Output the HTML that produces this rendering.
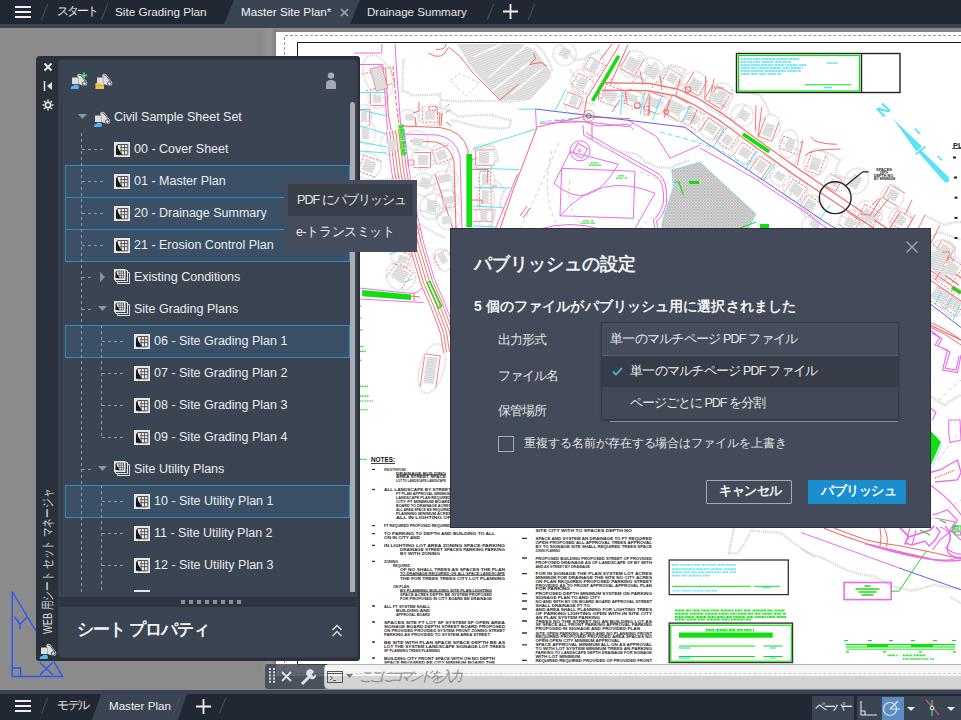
<!DOCTYPE html><html><head><meta charset="utf-8"><style>
*{margin:0;padding:0;box-sizing:border-box}
html,body{width:961px;height:720px;overflow:hidden}
body{background:#8b8b8b;font-family:"Liberation Sans",sans-serif;position:relative;color:#e8e8e8}
.a{position:absolute}
.t{white-space:nowrap;line-height:1}
.ham{width:16px;height:2px;background:#f0f0f0}
.sl{width:1px;height:16px;background:#4a5363;transform:skewX(-22deg)}
.sel{position:absolute;left:65px;width:285px;height:33px;background:#3b5066;border:1px solid #2f8cbd}
.dv{position:absolute;width:1px;background:repeating-linear-gradient(180deg,#8f99a6 0 3px,transparent 3px 6px)}
.dh{position:absolute;height:1px;background:repeating-linear-gradient(90deg,#8f99a6 0 3px,transparent 3px 6px)}
</style></head><body>
<div class="a" style="left:0;top:0;width:961px;height:24px;background:#222833"></div>
<div class="a" style="left:0;top:24px;width:961px;height:4px;background:#3b4453"></div>
<div class="a" style="left:224px;top:0;width:136px;height:24px;background:#3b4453;clip-path:polygon(10px 0,100% 0,calc(100% - 10px) 100%,0 100%)"></div>
<div class="a ham" style="left:15px;top:6px"></div>
<div class="a ham" style="left:15px;top:11px"></div>
<div class="a ham" style="left:15px;top:16px"></div>
<div class="a sl" style="left:44px;top:4px"></div>
<div class="a sl" style="left:104px;top:4px"></div>
<div class="a sl" style="left:490px;top:4px"></div>
<div class="a sl" style="left:531px;top:4px"></div>
<div class="a t" style="left:57px;top:5px;font-size:12px;color:#e6e6e6;font-weight:normal;letter-spacing:-2.1px">スタート</div>
<div class="a t" style="left:115px;top:5.5px;font-size:11.7px;color:#e6e6e6;font-weight:normal;">Site Grading Plan</div>
<div class="a t" style="left:241px;top:5.5px;font-size:11.7px;color:#f2f2f2;font-weight:normal;">Master Site Plan*</div>
<svg class="a" style="left:340px;top:8px" width="9" height="9"><path d="M1 1L8 8M8 1L1 8" stroke="#a3a7ae" stroke-width="1.6"/></svg>
<div class="a t" style="left:367px;top:5.5px;font-size:11.6px;color:#e6e6e6;font-weight:normal;">Drainage Summary</div>
<svg class="a" style="left:503px;top:4px" width="15" height="15"><path d="M7.5 0V15M0 7.5H15" stroke="#f0f0f0" stroke-width="1.8"/></svg>
<div class="a" style="left:262px;top:28px;width:14px;height:648px;background:linear-gradient(90deg,#8b8b8b,#959595 60%,#7d7d7d)"></div>
<div class="a" style="left:276px;top:28px;width:685px;height:4px;background:linear-gradient(180deg,#8b8b8b,#7f7f7f)"></div>
<div class="a" style="left:276px;top:32px;width:685px;height:644px;background:#fff"></div>
<div class="a" style="left:285px;top:35px;width:676px;height:0;border-top:1.5px dashed #999"></div>
<div class="a" style="left:284px;top:37px;width:0;height:636px;border-left:1.5px dashed #999"></div>
<div class="a" style="left:285px;top:672.5px;width:676px;height:0;border-top:1.5px dashed #999"></div>
<div class="a" style="left:296.5px;top:41.5px;width:680px;height:623px;border:1.6px solid #1a1a1a"></div>
<svg class="a" style="left:0;top:0" width="961" height="720"><defs><clipPath id="dc"><rect x="299" y="44" width="662" height="619.5"/></clipPath><pattern id="hh" width="2.2" height="2.2" patternUnits="userSpaceOnUse" patternTransform="rotate(70)"><rect width="2.2" height="2.2" fill="#e5e5e5"/><rect width="0.6" height="2.2" fill="#cdcdcd"/></pattern><pattern id="xh" width="3" height="3" patternUnits="userSpaceOnUse"><rect width="3" height="3" fill="#d6d6d6"/><path d="M0 0L3 3M3 0L0 3" stroke="#b4b4b4" stroke-width="0.7"/></pattern></defs><g clip-path="url(#dc)">
<path d="M-8.5 -16.0 V14.0 H8.5 V-16.0" fill="none" stroke="#f06a6a" stroke-width="0.8" stroke-dasharray="2.5 1.2" transform="translate(379.0 78.5) rotate(255)"/>
<ellipse cx="0" cy="0" rx="13.2" ry="22.6" fill="none" stroke="#dedede" stroke-width="2" stroke-dasharray="1.2 0.8" transform="translate(378.0 76.5) rotate(-23)"/>
<path d="M-6.5 -8.5 V6.5 H6.5 V-8.5" fill="none" stroke="#f06a6a" stroke-width="0.8" transform="translate(377.0 99.0) rotate(90)"/>
<ellipse cx="0" cy="0" rx="9.8" ry="9.8" fill="none" stroke="#dedede" stroke-width="2" stroke-dasharray="1.2 0.8" transform="translate(378.0 98.4) rotate(17)"/>
<path d="M-5.5 -9.5 V7.5 H5.5 V-9.5" fill="none" stroke="#f06a6a" stroke-width="0.8" transform="translate(364.0 117.0) rotate(180)"/>
<ellipse cx="0" cy="0" rx="8.1" ry="11.5" fill="none" stroke="#dedede" stroke-width="2" stroke-dasharray="1.2 0.8" transform="translate(363.6 116.0) rotate(5)"/>
<ellipse cx="0" cy="0" rx="8.9" ry="12.3" fill="none" stroke="#dedede" stroke-width="2" stroke-dasharray="1.2 0.8" transform="translate(366.5 132.3) rotate(-11)"/>
<path d="M-8.5 -10.5 V8.5 H8.5 V-10.5" fill="none" stroke="#f06a6a" stroke-width="0.8" stroke-dasharray="2.5 1.2" transform="translate(369.0 166.0) rotate(110)"/>
<ellipse cx="0" cy="0" rx="13.2" ry="13.2" fill="none" stroke="#dedede" stroke-width="2" stroke-dasharray="1.2 0.8" transform="translate(367.5 166.0) rotate(33)"/>
<ellipse cx="0" cy="0" rx="13.2" ry="12.3" fill="none" stroke="#dedede" stroke-width="2" stroke-dasharray="1.2 0.8" transform="translate(376.8 192.3) rotate(1)"/>
<path d="M-7.0 -8.2 V6.2 H7.0 V-8.2" fill="none" stroke="#f06a6a" stroke-width="0.8" stroke-dasharray="2.5 1.2" transform="translate(402.8 259.4) rotate(290)"/>
<ellipse cx="0" cy="0" rx="10.6" ry="9.2" fill="none" stroke="#dedede" stroke-width="2" stroke-dasharray="1.2 0.8" transform="translate(401.9 258.2) rotate(17)"/>
<path d="M-9.5 -11.0 V9.0 H9.5 V-11.0" fill="none" stroke="#f06a6a" stroke-width="0.8" stroke-dasharray="2.5 1.2" transform="translate(400.0 274.5) rotate(215)"/>
<ellipse cx="0" cy="0" rx="14.9" ry="14.0" fill="none" stroke="#dedede" stroke-width="2" stroke-dasharray="1.2 0.8" transform="translate(400.9 275.9) rotate(40)"/>
<path d="M-7.8 -17.7 V15.7 H7.8 V-17.7" fill="none" stroke="#f06a6a" stroke-width="0.8" transform="translate(430.4 370.4) rotate(188)"/>
<ellipse cx="0" cy="0" rx="12.1" ry="25.4" fill="none" stroke="#dedede" stroke-width="2" stroke-dasharray="1.2 0.8" transform="translate(431.8 368.5) rotate(16)"/>
<path d="M-7.5 -8.8 V6.8 H7.5 V-8.8" fill="none" stroke="#f06a6a" stroke-width="0.8" stroke-dasharray="2.5 1.2" transform="translate(430.0 115.3) rotate(0)"/>
<ellipse cx="0" cy="0" rx="11.5" ry="10.3" fill="none" stroke="#dedede" stroke-width="2" stroke-dasharray="1.2 0.8" transform="translate(430.6 114.9) rotate(-12)"/>
<ellipse cx="0" cy="0" rx="10.4" ry="8.5" fill="none" stroke="#dedede" stroke-width="2" stroke-dasharray="1.2 0.8" transform="translate(408.4 118.4) rotate(12)"/>
<ellipse cx="0" cy="0" rx="11.5" ry="9.8" fill="none" stroke="#dedede" stroke-width="2" stroke-dasharray="1.2 0.8" transform="translate(416.5 140.4) rotate(11)"/>
<path d="M-7.0 -9.5 V7.5 H7.0 V-9.5" fill="none" stroke="#f06a6a" stroke-width="0.8" stroke-dasharray="2.5 1.2" transform="translate(441.5 155.0) rotate(70)"/>
<ellipse cx="0" cy="0" rx="10.6" ry="11.5" fill="none" stroke="#dedede" stroke-width="2" stroke-dasharray="1.2 0.8" transform="translate(442.2 153.8) rotate(69)"/>
<path d="M-7.5 -9.5 V7.5 H7.5 V-9.5" fill="none" stroke="#f06a6a" stroke-width="0.8" transform="translate(423.0 160.0) rotate(270)"/>
<ellipse cx="0" cy="0" rx="11.5" ry="11.5" fill="none" stroke="#dedede" stroke-width="2" stroke-dasharray="1.2 0.8" transform="translate(423.1 158.1) rotate(-11)"/>
<ellipse cx="0" cy="0" rx="9.8" ry="14.0" fill="none" stroke="#dedede" stroke-width="2" stroke-dasharray="1.2 0.8" transform="translate(444.2 180.3) rotate(80)"/>
<ellipse cx="0" cy="0" rx="11.5" ry="11.5" fill="none" stroke="#dedede" stroke-width="2" stroke-dasharray="1.2 0.8" transform="translate(423.6 184.4) rotate(28)"/>
<path d="M-6.0 -9.5 V7.5 H6.0 V-9.5" fill="none" stroke="#f06a6a" stroke-width="0.8" stroke-dasharray="2.5 1.2" transform="translate(448.5 200.0) rotate(350)"/>
<ellipse cx="0" cy="0" rx="8.9" ry="11.5" fill="none" stroke="#dedede" stroke-width="2" stroke-dasharray="1.2 0.8" transform="translate(447.0 199.8) rotate(85)"/>
<ellipse cx="0" cy="0" rx="11.5" ry="13.2" fill="none" stroke="#dedede" stroke-width="2" stroke-dasharray="1.2 0.8" transform="translate(431.5 206.3) rotate(25)"/>
<ellipse cx="0" cy="0" rx="9.8" ry="11.5" fill="none" stroke="#dedede" stroke-width="2" stroke-dasharray="1.2 0.8" transform="translate(448.8 219.9) rotate(86)"/>
<path d="M-7.7 -10.5 V8.5 H7.7 V-10.5" fill="none" stroke="#f06a6a" stroke-width="0.8" transform="translate(484.1 157.6) rotate(90)"/>
<ellipse cx="0" cy="0" rx="11.8" ry="13.1" fill="none" stroke="#dedede" stroke-width="2" stroke-dasharray="1.2 0.8" transform="translate(483.1 157.2) rotate(-16)"/>
<path d="M-5.5 -9.7 V7.7 H5.5 V-9.7" fill="none" stroke="#f06a6a" stroke-width="0.8" stroke-dasharray="2.5 1.2" transform="translate(485.0 179.2) rotate(180)"/>
<ellipse cx="0" cy="0" rx="8.1" ry="11.8" fill="none" stroke="#dedede" stroke-width="2" stroke-dasharray="1.2 0.8" transform="translate(486.6 180.6) rotate(-6)"/>
<path d="M-5.8 -11.2 V9.2 H5.8 V-11.2" fill="none" stroke="#f06a6a" stroke-width="0.8" stroke-dasharray="2.5 1.2" transform="translate(485.3 197.1) rotate(180)"/>
<ellipse cx="0" cy="0" rx="8.6" ry="14.4" fill="none" stroke="#dedede" stroke-width="2" stroke-dasharray="1.2 0.8" transform="translate(485.5 198.2) rotate(-1)"/>
<path d="M-5.8 -10.5 V8.5 H5.8 V-10.5" fill="none" stroke="#f06a6a" stroke-width="0.8" transform="translate(483.7 215.6) rotate(270)"/>
<ellipse cx="0" cy="0" rx="8.6" ry="13.1" fill="none" stroke="#dedede" stroke-width="2" stroke-dasharray="1.2 0.8" transform="translate(484.9 214.3) rotate(-7)"/>
<ellipse cx="0" cy="0" rx="9.8" ry="11.5" fill="none" stroke="#dedede" stroke-width="2" stroke-dasharray="1.2 0.8" transform="translate(390.6 143.6) rotate(11)"/>
<path d="M-7.5 -9.5 V7.5 H7.5 V-9.5" fill="none" stroke="#f06a6a" stroke-width="0.8" stroke-dasharray="2.5 1.2" transform="translate(410.0 233.0) rotate(290)"/>
<ellipse cx="0" cy="0" rx="11.5" ry="11.5" fill="none" stroke="#dedede" stroke-width="2" stroke-dasharray="1.2 0.8" transform="translate(410.3 233.8) rotate(30)"/>
<path d="M-7.5 -8.0 V6.0 H7.5 V-8.0" fill="none" stroke="#f06a6a" stroke-width="0.8" stroke-dasharray="2.5 1.2" transform="translate(443.0 258.5) rotate(150)"/>
<ellipse cx="0" cy="0" rx="11.5" ry="8.9" fill="none" stroke="#dedede" stroke-width="2" stroke-dasharray="1.2 0.8" transform="translate(443.1 259.9) rotate(62)"/>
<path d="M-6.2 -10.2 V8.2 H6.2 V-10.2" fill="none" stroke="#f06a6a" stroke-width="0.8" stroke-dasharray="2.5 1.2" transform="translate(594.3 66.3) rotate(120)"/>
<ellipse cx="0" cy="0" rx="9.3" ry="12.7" fill="none" stroke="#dedede" stroke-width="2" stroke-dasharray="1.2 0.8" transform="translate(593.5 64.9) rotate(32)"/>
<path d="M-7.1 -10.1 V8.1 H7.1 V-10.1" fill="none" stroke="#f06a6a" stroke-width="0.8" stroke-dasharray="2.5 1.2" transform="translate(582.1 83.1) rotate(120)"/>
<ellipse cx="0" cy="0" rx="10.9" ry="12.5" fill="none" stroke="#dedede" stroke-width="2" stroke-dasharray="1.2 0.8" transform="translate(581.8 81.6) rotate(10)"/>
<path d="M-6.2 -9.3 V7.3 H6.2 V-9.3" fill="none" stroke="#f06a6a" stroke-width="0.8" transform="translate(573.8 100.8) rotate(290)"/>
<ellipse cx="0" cy="0" rx="9.4" ry="11.2" fill="none" stroke="#dedede" stroke-width="2" stroke-dasharray="1.2 0.8" transform="translate(573.9 102.8) rotate(5)"/>
<path d="M-8.2 -11.1 V9.1 H8.2 V-11.1" fill="none" stroke="#f06a6a" stroke-width="0.8" transform="translate(631.7 64.4) rotate(30)"/>
<ellipse cx="0" cy="0" rx="12.7" ry="14.2" fill="none" stroke="#dedede" stroke-width="2" stroke-dasharray="1.2 0.8" transform="translate(633.4 64.2) rotate(47)"/>
<ellipse cx="0" cy="0" rx="14.0" ry="12.8" fill="none" stroke="#dedede" stroke-width="2" stroke-dasharray="1.2 0.8" transform="translate(651.1 70.7) rotate(30)"/>
<path d="M-7.2 -9.1 V7.1 H7.2 V-9.1" fill="none" stroke="#f06a6a" stroke-width="0.8" stroke-dasharray="2.5 1.2" transform="translate(672.0 78.3) rotate(210)"/>
<ellipse cx="0" cy="0" rx="10.9" ry="10.9" fill="none" stroke="#dedede" stroke-width="2" stroke-dasharray="1.2 0.8" transform="translate(670.5 78.0) rotate(11)"/>
<path d="M-8.0 -10.1 V8.1 H8.0 V-10.1" fill="none" stroke="#f06a6a" stroke-width="0.8" transform="translate(695.5 84.9) rotate(30)"/>
<ellipse cx="0" cy="0" rx="12.3" ry="12.6" fill="none" stroke="#dedede" stroke-width="2" stroke-dasharray="1.2 0.8" transform="translate(694.3 83.9) rotate(37)"/>
<path d="M-9.0 -9.2 V7.2 H9.0 V-9.2" fill="none" stroke="#f06a6a" stroke-width="0.8" stroke-dasharray="2.5 1.2" transform="translate(610.2 95.3) rotate(110)"/>
<ellipse cx="0" cy="0" rx="14.1" ry="11.0" fill="none" stroke="#dedede" stroke-width="2" stroke-dasharray="1.2 0.8" transform="translate(610.7 93.7) rotate(29)"/>
<path d="M-7.7 -8.2 V6.2 H7.7 V-8.2" fill="none" stroke="#f06a6a" stroke-width="0.8" stroke-dasharray="2.5 1.2" transform="translate(632.2 98.0) rotate(110)"/>
<ellipse cx="0" cy="0" rx="11.8" ry="9.4" fill="none" stroke="#dedede" stroke-width="2" stroke-dasharray="1.2 0.8" transform="translate(633.0 99.6) rotate(1)"/>
<path d="M-9.1 -9.2 V7.2 H9.1 V-9.2" fill="none" stroke="#f06a6a" stroke-width="0.8" transform="translate(653.4 102.7) rotate(110)"/>
<ellipse cx="0" cy="0" rx="14.2" ry="11.0" fill="none" stroke="#dedede" stroke-width="2" stroke-dasharray="1.2 0.8" transform="translate(654.9 102.8) rotate(9)"/>
<path d="M-10.0 -10.1 V8.1 H10.0 V-10.1" fill="none" stroke="#f06a6a" stroke-width="0.8" transform="translate(674.9 107.4) rotate(120)"/>
<ellipse cx="0" cy="0" rx="15.8" ry="12.5" fill="none" stroke="#dedede" stroke-width="2" stroke-dasharray="1.2 0.8" transform="translate(676.6 107.9) rotate(24)"/>
<path d="M-9.0 -9.2 V7.2 H9.0 V-9.2" fill="none" stroke="#f06a6a" stroke-width="0.8" stroke-dasharray="2.5 1.2" transform="translate(692.5 117.7) rotate(120)"/>
<ellipse cx="0" cy="0" rx="14.0" ry="11.0" fill="none" stroke="#dedede" stroke-width="2" stroke-dasharray="1.2 0.8" transform="translate(691.4 119.7) rotate(46)"/>
<path d="M-7.2 -10.1 V8.1 H7.2 V-10.1" fill="none" stroke="#f06a6a" stroke-width="0.8" transform="translate(720.7 96.2) rotate(120)"/>
<ellipse cx="0" cy="0" rx="11.0" ry="12.5" fill="none" stroke="#dedede" stroke-width="2" stroke-dasharray="1.2 0.8" transform="translate(721.6 95.2) rotate(14)"/>
<ellipse cx="0" cy="0" rx="11.5" ry="11.5" fill="none" stroke="#dedede" stroke-width="2" stroke-dasharray="1.2 0.8" transform="translate(564.7 54.2) rotate(15)"/>
<path d="M-10.0 -9.1 V7.1 H10.0 V-9.1" fill="none" stroke="#f06a6a" stroke-width="0.8" transform="translate(716.5 98.3) rotate(30)"/>
<ellipse cx="0" cy="0" rx="15.8" ry="10.9" fill="none" stroke="#dedede" stroke-width="2" stroke-dasharray="1.2 0.8" transform="translate(715.3 99.1) rotate(46)"/>
<ellipse cx="0" cy="0" rx="11.2" ry="11.0" fill="none" stroke="#dedede" stroke-width="2" stroke-dasharray="1.2 0.8" transform="translate(742.3 115.3) rotate(40)"/>
<path d="M-7.1 -11.1 V9.1 H7.1 V-11.1" fill="none" stroke="#f06a6a" stroke-width="0.8" transform="translate(768.4 130.2) rotate(20)"/>
<ellipse cx="0" cy="0" rx="10.9" ry="14.1" fill="none" stroke="#dedede" stroke-width="2" stroke-dasharray="1.2 0.8" transform="translate(768.3 128.3) rotate(30)"/>
<path d="M-6.4 -11.1 V9.1 H6.4 V-11.1" fill="none" stroke="#f06a6a" stroke-width="0.8" stroke-dasharray="2.5 1.2" transform="translate(789.9 145.2) rotate(110)"/>
<ellipse cx="0" cy="0" rx="9.5" ry="14.1" fill="none" stroke="#dedede" stroke-width="2" stroke-dasharray="1.2 0.8" transform="translate(788.6 143.7) rotate(7)"/>
<path d="M-7.2 -11.0 V9.0 H7.2 V-11.0" fill="none" stroke="#f06a6a" stroke-width="0.8" stroke-dasharray="2.5 1.2" transform="translate(815.2 163.9) rotate(20)"/>
<ellipse cx="0" cy="0" rx="11.1" ry="14.1" fill="none" stroke="#dedede" stroke-width="2" stroke-dasharray="1.2 0.8" transform="translate(815.6 162.5) rotate(27)"/>
<path d="M-8.2 -9.1 V7.1 H8.2 V-9.1" fill="none" stroke="#f06a6a" stroke-width="0.8" transform="translate(711.3 128.3) rotate(215)"/>
<ellipse cx="0" cy="0" rx="12.7" ry="10.9" fill="none" stroke="#dedede" stroke-width="2" stroke-dasharray="1.2 0.8" transform="translate(710.9 128.1) rotate(29)"/>
<path d="M-7.1 -9.2 V7.2 H7.1 V-9.2" fill="none" stroke="#f06a6a" stroke-width="0.8" stroke-dasharray="2.5 1.2" transform="translate(727.1 139.7) rotate(35)"/>
<ellipse cx="0" cy="0" rx="10.9" ry="10.9" fill="none" stroke="#dedede" stroke-width="2" stroke-dasharray="1.2 0.8" transform="translate(727.7 137.8) rotate(23)"/>
<path d="M-8.2 -9.2 V7.2 H8.2 V-9.2" fill="none" stroke="#f06a6a" stroke-width="0.8" stroke-dasharray="2.5 1.2" transform="translate(745.0 152.7) rotate(215)"/>
<ellipse cx="0" cy="0" rx="12.6" ry="11.0" fill="none" stroke="#dedede" stroke-width="2" stroke-dasharray="1.2 0.8" transform="translate(744.6 151.5) rotate(22)"/>
<path d="M-7.3 -10.2 V8.2 H7.3 V-10.2" fill="none" stroke="#f06a6a" stroke-width="0.8" transform="translate(760.8 166.7) rotate(215)"/>
<ellipse cx="0" cy="0" rx="11.2" ry="12.7" fill="none" stroke="#dedede" stroke-width="2" stroke-dasharray="1.2 0.8" transform="translate(762.4 167.9) rotate(43)"/>
<ellipse cx="0" cy="0" rx="10.6" ry="9.5" fill="none" stroke="#dedede" stroke-width="2" stroke-dasharray="1.2 0.8" transform="translate(780.0 175.8) rotate(39)"/>
<path d="M-8.5 -9.5 V7.5 H8.5 V-9.5" fill="none" stroke="#f06a6a" stroke-width="0.8" stroke-dasharray="2.5 1.2" transform="translate(796.0 190.0) rotate(215)"/>
<ellipse cx="0" cy="0" rx="13.2" ry="11.5" fill="none" stroke="#dedede" stroke-width="2" stroke-dasharray="1.2 0.8" transform="translate(795.1 188.5) rotate(45)"/>
<path d="M-7.5 -9.5 V7.5 H7.5 V-9.5" fill="none" stroke="#f06a6a" stroke-width="0.8" stroke-dasharray="2.5 1.2" transform="translate(810.0 205.0) rotate(125)"/>
<ellipse cx="0" cy="0" rx="11.5" ry="11.5" fill="none" stroke="#dedede" stroke-width="2" stroke-dasharray="1.2 0.8" transform="translate(811.6 206.5) rotate(43)"/>
<ellipse cx="0" cy="0" rx="11.5" ry="14.0" fill="none" stroke="#dedede" stroke-width="2" stroke-dasharray="1.2 0.8" transform="translate(856.1 181.1) rotate(39)"/>
<path d="M-9.0 -10.5 V8.5 H9.0 V-10.5" fill="none" stroke="#f06a6a" stroke-width="0.8" stroke-dasharray="2.5 1.2" transform="translate(868.5 216.0) rotate(210)"/>
<ellipse cx="0" cy="0" rx="14.0" ry="13.2" fill="none" stroke="#dedede" stroke-width="2" stroke-dasharray="1.2 0.8" transform="translate(868.4 214.0) rotate(24)"/>
<path d="M-7.5 -9.5 V7.5 H7.5 V-9.5" fill="none" stroke="#f06a6a" stroke-width="0.8" transform="translate(893.0 195.0) rotate(120)"/>
<ellipse cx="0" cy="0" rx="11.5" ry="11.5" fill="none" stroke="#dedede" stroke-width="2" stroke-dasharray="1.2 0.8" transform="translate(892.1 196.8) rotate(22)"/>
<path d="M-7.5 -9.5 V7.5 H7.5 V-9.5" fill="none" stroke="#f06a6a" stroke-width="0.8" stroke-dasharray="2.5 1.2" transform="translate(900.0 220.0) rotate(120)"/>
<ellipse cx="0" cy="0" rx="11.5" ry="11.5" fill="none" stroke="#dedede" stroke-width="2" stroke-dasharray="1.2 0.8" transform="translate(900.1 219.6) rotate(50)"/>
<path d="M-8.5 -9.5 V7.5 H8.5 V-9.5" fill="none" stroke="#f06a6a" stroke-width="0.8" transform="translate(906.0 250.0) rotate(300)"/>
<ellipse cx="0" cy="0" rx="13.2" ry="11.5" fill="none" stroke="#dedede" stroke-width="2" stroke-dasharray="1.2 0.8" transform="translate(907.9 248.1) rotate(35)"/>
<path d="M-9.0 -9.5 V7.5 H9.0 V-9.5" fill="none" stroke="#f06a6a" stroke-width="0.8" stroke-dasharray="2.5 1.2" transform="translate(941.5 270.0) rotate(300)"/>
<ellipse cx="0" cy="0" rx="14.0" ry="11.5" fill="none" stroke="#dedede" stroke-width="2" stroke-dasharray="1.2 0.8" transform="translate(941.1 268.2) rotate(18)"/>
<path d="M-7.5 -9.5 V7.5 H7.5 V-9.5" fill="none" stroke="#f06a6a" stroke-width="0.8" transform="translate(945.0 250.0) rotate(210)"/>
<ellipse cx="0" cy="0" rx="11.5" ry="11.5" fill="none" stroke="#dedede" stroke-width="2" stroke-dasharray="1.2 0.8" transform="translate(944.0 251.6) rotate(32)"/>
<path d="M-7.5 -9.5 V7.5 H7.5 V-9.5" fill="none" stroke="#f06a6a" stroke-width="0.8" transform="translate(850.0 223.0) rotate(305)"/>
<ellipse cx="0" cy="0" rx="11.5" ry="11.5" fill="none" stroke="#dedede" stroke-width="2" stroke-dasharray="1.2 0.8" transform="translate(851.2 221.3) rotate(39)"/>
<ellipse cx="0" cy="0" rx="11.5" ry="9.8" fill="none" stroke="#dedede" stroke-width="2" stroke-dasharray="1.2 0.8" transform="translate(813.2 225.7) rotate(16)"/>
<path d="M-6.5 -7.5 V5.5 H6.5 V-7.5" fill="none" stroke="#f06a6a" stroke-width="0.8" transform="translate(834.0 183.0) rotate(300)"/>
<ellipse cx="0" cy="0" rx="9.8" ry="8.1" fill="none" stroke="#dedede" stroke-width="2" stroke-dasharray="1.2 0.8" transform="translate(834.2 183.4) rotate(27)"/>
<path d="M-10.0 -14.5 V12.5 H10.0 V-14.5" fill="none" stroke="#f06a6a" stroke-width="0.8" stroke-dasharray="2.5 1.2" transform="translate(937.5 260.0) rotate(305)"/>
<ellipse cx="0" cy="0" rx="15.8" ry="20.0" fill="none" stroke="#dedede" stroke-width="2" stroke-dasharray="1.2 0.8" transform="translate(937.9 259.5) rotate(26)"/>
<path d="M-8.8 -10.8 V8.8 H8.8 V-10.8" fill="none" stroke="#f06a6a" stroke-width="0.8" stroke-dasharray="2.5 1.2" transform="translate(951.2 268.8) rotate(215)"/>
<ellipse cx="0" cy="0" rx="13.6" ry="13.6" fill="none" stroke="#dedede" stroke-width="2" stroke-dasharray="1.2 0.8" transform="translate(949.4 269.8) rotate(38)"/>
<path d="M-10.0 -12.0 V10.0 H10.0 V-12.0" fill="none" stroke="#f06a6a" stroke-width="0.8" stroke-dasharray="2.5 1.2" transform="translate(940.0 295.0) rotate(305)"/>
<ellipse cx="0" cy="0" rx="15.8" ry="15.8" fill="none" stroke="#dedede" stroke-width="2" stroke-dasharray="1.2 0.8" transform="translate(938.2 294.3) rotate(31)"/>
<path d="M-8.8 -10.8 V8.8 H8.8 V-10.8" fill="none" stroke="#f06a6a" stroke-width="0.8" stroke-dasharray="2.5 1.2" transform="translate(953.8 303.8) rotate(35)"/>
<ellipse cx="0" cy="0" rx="13.6" ry="13.6" fill="none" stroke="#dedede" stroke-width="2" stroke-dasharray="1.2 0.8" transform="translate(954.9 302.6) rotate(44)"/>
<path d="M403.4 58.7 Q402.7 74.9 402.5 90.6 Q409.3 92.8 411.8 95.3 Q425.9 95.2 440.0 94.3 Q439.4 97.2 442.0 100.0 Q456.6 102.0 470.0 101.0 Q488.5 100.4 511.0 101.8 Q518.5 101.4 530.0 98.0 Q542.1 81.7 552.3 70.0 Q550.1 62.9 543.0 51.2 Q540.0 48.0 535.5 43.7" stroke="#d9d9d9" stroke-width="2.4" fill="none" stroke-dasharray="1.3 0.9"/>
<path d="M441.8 100.0 Q439.2 101.3 440.0 107.4 Q449.5 109.9 458.7 116.8 Q474.0 114.6 492.4 115.0 Q499.4 117.6 511.0 120.5 Q509.7 126.0 509.0 128.0 Q500.6 128.7 492.0 128.0 Q481.0 127.3 470.0 125.0 Q459.8 121.4 450.0 120.0" stroke="#d9d9d9" stroke-width="2.4" fill="none" stroke-dasharray="1.3 0.9"/>
<path d="M560.0 44.0 Q570.0 54.5 575.0 60.0 Q581.7 60.0 585.0 58.0 Q591.6 52.6 600.0 50.0" stroke="#d9d9d9" stroke-width="2.4" fill="none" stroke-dasharray="1.3 0.9"/>
<path d="M570.0 70.0 Q573.9 75.4 580.0 85.0 Q578.8 92.0 575.0 100.0 Q586.7 101.9 595.0 105.0" stroke="#d9d9d9" stroke-width="2.4" fill="none" stroke-dasharray="1.3 0.9"/>
<path d="M640.0 55.0 Q638.3 66.7 632.0 75.0 Q636.0 76.0 645.0 80.0 Q652.1 70.8 655.0 62.0 Q659.9 69.5 660.0 78.0 Q662.9 72.1 670.0 65.0 Q678.9 66.3 685.0 70.0 Q680.4 76.7 680.0 85.0 Q692.3 85.3 700.0 83.0" stroke="#d9d9d9" stroke-width="2.4" fill="none" stroke-dasharray="1.3 0.9"/>
<path d="M600.0 92.0 Q603.1 95.7 610.0 102.0 Q615.5 96.3 625.0 95.0 Q634.0 97.9 640.0 104.0 Q650.3 101.7 660.0 100.0 Q664.5 107.2 672.0 112.0 Q679.2 110.7 690.0 108.0 Q693.1 113.6 700.0 120.0" stroke="#d9d9d9" stroke-width="2.4" fill="none" stroke-dasharray="1.3 0.9"/>
<path d="M725.0 100.0 Q721.1 106.3 720.0 115.0 Q729.9 119.0 735.0 120.0 Q739.0 114.4 745.0 105.0" stroke="#d9d9d9" stroke-width="2.4" fill="none" stroke-dasharray="1.3 0.9"/>
<path d="M730.0 90.0 Q743.6 92.0 760.0 95.0 Q766.8 105.7 770.0 115.0" stroke="#d9d9d9" stroke-width="2.4" fill="none" stroke-dasharray="1.3 0.9"/>
<path d="M780.0 140.0 Q788.0 147.4 800.0 150.0 Q796.1 156.3 795.0 165.0" stroke="#d9d9d9" stroke-width="2.4" fill="none" stroke-dasharray="1.3 0.9"/>
<path d="M820.0 150.0 Q831.4 154.1 840.0 160.0 Q836.5 165.4 835.0 175.0 Q845.5 177.9 860.0 180.0" stroke="#d9d9d9" stroke-width="2.4" fill="none" stroke-dasharray="1.3 0.9"/>
<path d="M840.0 215.0 Q848.7 220.5 860.0 225.0 Q869.4 219.8 880.0 215.0" stroke="#d9d9d9" stroke-width="2.4" fill="none" stroke-dasharray="1.3 0.9"/>
<path d="M880.0 235.0 Q892.3 239.9 900.0 245.0 Q907.9 244.3 915.0 240.0 Q923.4 245.8 935.0 255.0" stroke="#d9d9d9" stroke-width="2.4" fill="none" stroke-dasharray="1.3 0.9"/>
<path d="M925.0 215.0 Q937.0 221.6 945.0 225.0 Q951.7 221.9 961.0 222.0" stroke="#d9d9d9" stroke-width="2.4" fill="none" stroke-dasharray="1.3 0.9"/>
<path d="M380.0 180.0 Q390.2 180.2 398.0 176.0 Q412.5 183.3 430.0 186.0 Q442.9 181.5 452.0 176.0 Q453.1 186.0 455.0 200.0 Q445.2 209.8 440.0 215.0 Q428.7 213.5 420.0 210.0 Q408.8 217.6 400.0 222.0 Q393.0 212.5 385.0 205.0 Q380.9 193.6 380.0 180.0" stroke="#d9d9d9" stroke-width="2.4" fill="none" stroke-dasharray="1.3 0.9"/>
<path d="M395.0 230.0 Q405.3 225.6 420.0 224.0 Q432.8 232.8 445.0 238.0" stroke="#d9d9d9" stroke-width="2.4" fill="none" stroke-dasharray="1.3 0.9"/>
<path d="M476.0 150.0 Q484.6 146.4 492.0 145.0 Q497.1 151.0 498.0 160.0 Q491.6 164.8 490.0 172.0" stroke="#d9d9d9" stroke-width="2.4" fill="none" stroke-dasharray="1.3 0.9"/>
<path d="M495.0 180.0 Q499.7 182.8 505.0 190.0 Q500.9 196.8 500.0 205.0 Q502.9 208.2 505.0 215.0" stroke="#d9d9d9" stroke-width="2.4" fill="none" stroke-dasharray="1.3 0.9"/>
<path d="M480.0 205.0 Q486.8 209.5 495.0 210.0 Q494.9 219.8 490.0 228.0" stroke="#d9d9d9" stroke-width="2.4" fill="none" stroke-dasharray="1.3 0.9"/>
<path d="M440.0 150.0 Q446.0 157.9 450.0 165.0 Q445.7 170.2 445.0 180.0" stroke="#d9d9d9" stroke-width="2.4" fill="none" stroke-dasharray="1.3 0.9"/>
<path d="M425.0 197.0 Q430.1 203.1 440.0 205.0 Q438.5 214.8 435.0 220.0" stroke="#d9d9d9" stroke-width="2.4" fill="none" stroke-dasharray="1.3 0.9"/>
<path d="M470.0 310.0 Q472.6 320.7 480.0 330.0 Q474.9 338.7 470.0 345.0" stroke="#d9d9d9" stroke-width="2.4" fill="none" stroke-dasharray="1.3 0.9"/>
<path d="M734.0 528.3 Q730.6 543.3 729.0 553.3 Q731.0 553.5 737.3 553.3 Q745.3 543.9 751.0 530.4 Q766.7 532.5 780.0 532.5 Q799.0 547.1 815.0 557.5" stroke="#d9d9d9" stroke-width="2.4" fill="none" stroke-dasharray="1.3 0.9"/>
<path d="M801.0 549.2 Q810.7 554.3 821.8 557.5 Q836.3 565.6 846.8 570.0 Q859.9 574.6 873.9 576.2 Q885.1 581.8 892.7 586.7 Q902.7 588.2 911.4 590.8 Q923.3 588.2 934.3 584.6 Q945.6 587.4 961.0 588.8" stroke="#d9d9d9" stroke-width="2.4" fill="none" stroke-dasharray="1.3 0.9"/>
<path d="M951.0 597.0 Q958.5 602.0 961.0 603.3" stroke="#d9d9d9" stroke-width="2.4" fill="none" stroke-dasharray="1.3 0.9"/>
<path d="M925.0 240.0 Q933.6 235.4 940.0 232.0 Q951.7 236.4 961.0 240.0" stroke="#d9d9d9" stroke-width="2.4" fill="none" stroke-dasharray="1.3 0.9"/>
<path d="M935.0 295.0 Q942.2 299.2 950.0 300.0 Q953.4 306.3 961.0 310.0" stroke="#d9d9d9" stroke-width="2.4" fill="none" stroke-dasharray="1.3 0.9"/>
<path d="M930.0 395.0 Q935.1 400.5 945.0 405.0 Q952.9 398.7 961.0 395.0" stroke="#d9d9d9" stroke-width="2.4" fill="none" stroke-dasharray="1.3 0.9"/>
<path d="M560 229 Q540 200 552 150 M585 229 Q565 210 570 180 M640 229 Q650 215 670 210 M520 229 Q535 200 560 140" stroke="#d0d0d0" stroke-width="1" fill="none" stroke-dasharray="4 3"/>
<path d="M938 400 L961 380 M938 460 L961 430 M930 520 L961 500" stroke="#d0d0d0" stroke-width="1" fill="none" stroke-dasharray="4 3"/>
<path d="M457 44 L522 44 L535 50 L550 70 L551 77 L530 100 L500 100 L475 72 L468 62 Z" fill="url(#hh)"/>
<path d="M473.6 56.9 L501.7 43.7" stroke="#ffffff" stroke-width="1.6" fill="none"/>
<path d="M488.6 77.5 L526.0 45.6" stroke="#ffffff" stroke-width="1.6" fill="none"/>
<path d="M492.4 90.6 L529.8 62.5" stroke="#ffffff" stroke-width="1.6" fill="none"/>
<path d="M511.0 94.3 L543.0 68.0" stroke="#ffffff" stroke-width="1.6" fill="none"/>
<path d="M449.3 47.5 L460.5 56.9 L473.6 73.7 L499.9 100.0 L518.6 84.0" stroke="#f06a6a" stroke-width="1" fill="none"/>
<path d="M533.6 53.0 L535.5 58.7 L529.8 64.4 L541.0 62.5 L546.7 66.2" stroke="#f06a6a" stroke-width="1" fill="none"/>
<path d="M428.7 53.1 Q441.8 62 448.4 47.5 M436 49.4 Q446 50 446 44" stroke="#f06a6a" stroke-width="1" fill="none"/>
<path d="M450.2 80.3 L459.6 73.7 L479.3 83.0 L466.2 96.2 Z" stroke="#cccccc" stroke-width="1" fill="none" stroke-dasharray="3 2"/>
<path d="M354.0 53.0 L381.7 53.0 L382.0 44.0" stroke="#ec6cec" stroke-width="1.0" fill="none"/>
<path d="M360.0 64.5 L382.8 64.4 L387.5 130.0" stroke="#ec6cec" stroke-width="1.0" fill="none"/>
<path d="M395.0 43.7 L396.0 62.5 L400.6 124.3 L402.5 126.0" stroke="#ec6cec" stroke-width="1.0" fill="none"/>
<path d="M385.6 68.0 L388.4 115.0 L391.2 130.0" stroke="#f06a6a" stroke-width="1.0" fill="none"/>
<path d="M393.0 66.0 L396.0 102.0 L398.7 122.4" stroke="#f06a6a" stroke-width="1" fill="none" stroke-dasharray="4 2"/>
<path d="M403.9 129.0 L408.9 168.8 L415.8 208.4 L423.7 243.0 L434.6 279.4 L444.4 302.0 L454.7 329.9 L457.9 350.8" stroke="#ec6cec" stroke-width="0.9" fill="none"/>
<path d="M401.5 129.3 L406.4 169.2 L413.4 208.9 L421.3 243.6 L432.2 280.2 L442.1 303.0 L452.3 330.5 L455.4 351.2" stroke="#f06a6a" stroke-width="0.9" fill="none"/>
<path d="M398.5 129.7 L403.5 169.6 L410.5 209.5 L418.4 244.4 L429.4 281.2 L439.3 304.1 L449.4 331.3 L452.5 351.6" stroke="#f06a6a" stroke-width="0.9" fill="none"/>
<path d="M395.5 130.1 L400.5 170.1 L407.5 210.1 L415.5 245.1 L426.5 282.2 L436.5 305.2 L446.5 332.1 L449.5 352.1" stroke="#f06a6a" stroke-width="0.9" fill="none"/>
<path d="M392.5 130.4 L397.5 170.5 L404.6 210.7 L412.6 245.9 L423.7 283.2 L433.8 306.3 L443.6 332.9 L446.5 352.5" stroke="#f06a6a" stroke-width="0.9" fill="none"/>
<path d="M389.6 130.8 L394.6 171.0 L401.6 211.3 L409.7 246.7 L420.9 284.1 L431.0 307.4 L440.7 333.7 L443.6 353.0" stroke="#f06a6a" stroke-width="0.9" fill="none"/>
<path d="M386.6 131.2 L391.6 171.4 L398.7 211.9 L406.7 247.1" stroke="#ec6cec" stroke-width="0.9" fill="none"/>
<path d="M360.0 92.5 L387.0 92.5" stroke="#5ae2f6" stroke-width="1.0" fill="none"/>
<path d="M360.0 110.0 L387.0 116.0" stroke="#5ae2f6" stroke-width="1.0" fill="none"/>
<path d="M360.0 126.0 L387.0 134.0" stroke="#5ae2f6" stroke-width="1.0" fill="none"/>
<path d="M360.0 142.0 L387.0 147.0" stroke="#5ae2f6" stroke-width="1.0" fill="none"/>
<path d="M360.0 151.0 L387.0 153.0" stroke="#5ae2f6" stroke-width="1.0" fill="none"/>
<path d="M389.3 253.9 L396.5 252.0" stroke="#5ae2f6" stroke-width="1.0" fill="none"/>
<path d="M402.0 282.8 L412.8 279.0" stroke="#5ae2f6" stroke-width="1.0" fill="none"/>
<path d="M362.0 212.0 L380.0 215.0" stroke="#5ae2f6" stroke-width="1.0" fill="none"/>
<path d="M362.0 238.0 L378.0 240.0" stroke="#5ae2f6" stroke-width="1.0" fill="none"/>
<rect x="-6.0" y="-11.5" width="12.0" height="23.0" fill="url(#hh)" stroke="#f06a6a" stroke-width="0.6" transform="translate(379.0 78.5) rotate(-15)"/>
<rect x="-4.0" y="-4.0" width="8.0" height="8.0" fill="url(#hh)" transform="translate(377.0 99.0) rotate(0)"/>
<rect x="-3.0" y="-5.0" width="6.0" height="10.0" fill="url(#hh)" transform="translate(364.0 117.0) rotate(0)"/>
<rect x="-3.5" y="-5.5" width="7.0" height="11.0" fill="url(#hh)" transform="translate(365.5 133.5) rotate(0)"/>
<rect x="-6.0" y="-6.0" width="12.0" height="12.0" fill="url(#hh)" transform="translate(369.0 166.0) rotate(20)"/>
<rect x="-6.0" y="-5.5" width="12.0" height="11.0" fill="url(#hh)" transform="translate(376.0 190.5) rotate(10)"/>
<rect x="-4.5" y="-3.7" width="9.0" height="7.3" fill="url(#hh)" transform="translate(402.8 259.4) rotate(20)"/>
<rect x="-7.0" y="-6.5" width="14.0" height="13.0" fill="url(#hh)" transform="translate(400.0 274.5) rotate(35)"/>
<rect x="-5.3" y="-13.2" width="10.7" height="26.3" fill="url(#hh)" transform="translate(430.4 370.4) rotate(8)"/>
<path d="M362.2 290 L411 294.5 L411 300 L362.2 296.3 Z" fill="#10e010"/>
<path d="M360.4 288.2 L412.8 293.6 Q418 293 422 288" stroke="#ec6cec" stroke-width="1.0" fill="none"/>
<path d="M360.4 299 L423.6 302.6" stroke="#ec6cec" stroke-width="1.0" fill="none"/>
<path d="M411.0 296.0 L420.0 297.0" stroke="#f06a6a" stroke-width="1.0" fill="none"/>
<path d="M414.0 293.0 L414.0 301.0" stroke="#f06a6a" stroke-width="1.0" fill="none"/>
<path d="M427.2 282.8 L430 281.3 L441.6 306.2 L438.4 308 Z" fill="none" stroke="#10e010" stroke-width="1.3"/>
<path d="M360.0 346.5 L364.0 346.5" stroke="#10e010" stroke-width="1.1" fill="none" stroke-dasharray="1.2 0.5"/>
<path d="M360.0 351.4 L366.0 351.4" stroke="#10e010" stroke-width="1.1" fill="none" stroke-dasharray="1.2 0.5"/>
<path d="M360.0 360.2 L362.0 360.2" stroke="#10e010" stroke-width="1.1" fill="none" stroke-dasharray="1.2 0.5"/>
<path d="M360.0 386.4 L368.0 386.4" stroke="#10e010" stroke-width="1.1" fill="none" stroke-dasharray="1.2 0.5"/>
<path d="M360.0 396.1 L369.0 396.1" stroke="#10e010" stroke-width="1.1" fill="none" stroke-dasharray="1.2 0.5"/>
<path d="M360.0 401.0 L373.0 401.0" stroke="#10e010" stroke-width="1.1" fill="none" stroke-dasharray="1.2 0.5"/>
<path d="M360.0 409.8 L368.0 409.8" stroke="#10e010" stroke-width="1.1" fill="none" stroke-dasharray="1.2 0.5"/>
<path d="M360.0 459.4 L367.0 459.4" stroke="#10e010" stroke-width="1.1" fill="none" stroke-dasharray="1.2 0.5"/>
<path d="M360.0 306.0 L362.0 306.0" stroke="#10e010" stroke-width="1.1" fill="none" stroke-dasharray="1.2 0.5"/>
<path d="M360.0 318.0 L362.0 318.0" stroke="#10e010" stroke-width="1.1" fill="none" stroke-dasharray="1.2 0.5"/>
<path d="M360.0 330.0 L363.0 330.0" stroke="#10e010" stroke-width="1.1" fill="none" stroke-dasharray="1.2 0.5"/>
<text x="0" y="0" font-family="Liberation Sans" font-size="6.5" font-weight="bold" fill="none" stroke="#10e010" stroke-width="0.7" textLength="31" lengthAdjust="spacingAndGlyphs" transform="translate(398.5 125) rotate(84)">BIRCH ROAD</text>
<path d="M402 126 L440 127.5 Q463 131 468 150 L469.6 229" stroke="#f06a6a" stroke-width="1.0" fill="none"/>
<path d="M405 134 L438 135 Q456 139 460 156 L462 229" stroke="#ec6cec" stroke-width="1.0" fill="none"/>
<path d="M410 141 L436 142 Q451 146 454 162 L456 229" stroke="#f06a6a" stroke-width="1.0" fill="none"/>
<rect x="466.4" y="154" width="5.6" height="73" fill="#10e010"/>
<path d="M435.0 174.0 L453.0 229.0" stroke="#f06a6a" stroke-width="1.0" fill="none"/>
<rect x="-5.0" y="-4.3" width="10.0" height="8.6" fill="url(#hh)" transform="translate(430.0 115.3) rotate(0)"/>
<rect x="-4.3" y="-3.2" width="8.7" height="6.5" fill="url(#hh)" transform="translate(409.4 117.2) rotate(0)"/>
<rect x="-5.0" y="-4.0" width="10.0" height="8.0" fill="url(#hh)" transform="translate(418.0 142.0) rotate(10)"/>
<rect x="-4.5" y="-5.0" width="9.0" height="10.0" fill="url(#hh)" transform="translate(441.5 155.0) rotate(70)"/>
<rect x="-5.0" y="-5.0" width="10.0" height="10.0" fill="url(#hh)" transform="translate(423.0 160.0) rotate(0)"/>
<rect x="-4.0" y="-6.5" width="8.0" height="13.0" fill="url(#hh)" transform="translate(444.0 178.5) rotate(80)"/>
<rect x="-5.0" y="-5.0" width="10.0" height="10.0" fill="url(#hh)" transform="translate(425.0 183.0) rotate(20)"/>
<rect x="-3.5" y="-5.0" width="7.0" height="10.0" fill="url(#hh)" transform="translate(448.5 200.0) rotate(80)"/>
<rect x="-5.0" y="-6.0" width="10.0" height="12.0" fill="url(#hh)" transform="translate(432.0 206.0) rotate(10)"/>
<rect x="-4.0" y="-5.0" width="8.0" height="10.0" fill="url(#hh)" transform="translate(447.0 220.0) rotate(80)"/>
<rect x="-5.2" y="-6.0" width="10.3" height="11.9" fill="url(#hh)" transform="translate(484.1 157.6) rotate(0)"/>
<rect x="-3.0" y="-5.2" width="6.0" height="10.4" fill="url(#hh)" transform="translate(485.0 179.2) rotate(0)"/>
<rect x="-3.3" y="-6.7" width="6.6" height="13.4" fill="url(#hh)" transform="translate(485.3 197.1) rotate(0)"/>
<rect x="-3.3" y="-6.0" width="6.6" height="11.9" fill="url(#hh)" transform="translate(483.7 215.6) rotate(0)"/>
<rect x="-4.0" y="-5.0" width="8.0" height="10.0" fill="url(#hh)" transform="translate(392.0 145.0) rotate(10)"/>
<rect x="428.7" y="106.5" width="7.5" height="3.7" fill="none" stroke="#f06a6a" stroke-width="1.2" stroke-dasharray="1 0.6"/>
<rect x="408" y="160" width="6" height="5" fill="none" stroke="#f06a6a" stroke-width="1.2" stroke-dasharray="1 0.6"/>
<path d="M419 102 L419 111 L413 113 M415 117 L416 126 M436.2 113 L440 113 L439 126 M442 113 L441 126 M446 122 L451 126" stroke="#f06a6a" stroke-width="1" fill="none"/>
<path d="M449 104 L446 107 M450 110 L445 113" stroke="#f06a6a" stroke-width="1" fill="none" stroke-dasharray="2 1"/>
<path d="M471.5 169.6 L487.8 169.6 L487.8 183.0" stroke="#f06a6a" stroke-width="1.0" fill="none"/>
<path d="M471.5 200.0 L482.0 200.0 L482.0 204.0" stroke="#f06a6a" stroke-width="1.0" fill="none"/>
<path d="M472.0 160.0 L478.0 158.0" stroke="#f06a6a" stroke-width="1" fill="none" stroke-dasharray="2 1"/>
<path d="M492.0 186.0 L498.0 186.0" stroke="#f06a6a" stroke-width="1" fill="none" stroke-dasharray="2 1"/>
<path d="M473.7 168.0 L519.0 169.6" stroke="#5ae2f6" stroke-width="1.0" fill="none"/>
<path d="M474.5 187.4 L511.6 188.0" stroke="#5ae2f6" stroke-width="1.0" fill="none"/>
<path d="M473.0 206.0 L502.7 207.5" stroke="#5ae2f6" stroke-width="1.0" fill="none"/>
<path d="M473.0 226.0 L495.3 226.8" stroke="#5ae2f6" stroke-width="1.0" fill="none"/>
<path d="M473.0 148.8 L536.9 128.7" stroke="#5ae2f6" stroke-width="1.0" fill="none"/>
<path d="M536.9 128.0 L513.0 190.4 L500.0 229.0" stroke="#f06a6a" stroke-width="1.0" fill="none"/>
<path d="M517.5 174.0 L495.3 229.0" stroke="#ec6cec" stroke-width="1.0" fill="none"/>
<g stroke="#f06a6a" fill="none" stroke-width="1"><path d="M520 216 L527 206 M523 218 L530 208" /></g>
<rect x="-5.0" y="-5.0" width="10.0" height="10.0" fill="url(#hh)" transform="translate(410.0 233.0) rotate(20)"/>
<rect x="-5.0" y="-3.5" width="10.0" height="7.0" fill="url(#hh)" transform="translate(443.0 258.5) rotate(60)"/>
<path d="M518.6 109.3 L535.5 109.0" stroke="#5ae2f6" stroke-width="1.0" fill="none"/>
<path d="M535.5 109.0 L588.7 115.5" stroke="#6262ee" stroke-width="1.0" fill="none"/>
<path d="M535.5 109.0 L536.4 128.0" stroke="#ec6cec" stroke-width="1.0" fill="none"/>
<path d="M540.0 122.0 L575.0 118.0 L586.0 120.0" stroke="#5ae2f6" stroke-width="1" fill="none" stroke-dasharray="5 2"/>
<path d="M537.0 127.0 L583.0 116.8 L630.0 118.7" stroke="#f06a6a" stroke-width="1.0" fill="none"/>
<path d="M555.0 120.5 L583.0 121.5 L598.0 126.0 L628.0 124.3 L633.7 130.0" stroke="#ec6cec" stroke-width="1.0" fill="none"/>
<path d="M628.0 120.0 L656.7 136.7 L670.0 158.3 L700.0 145.0" stroke="#ec6cec" stroke-width="1.0" fill="none"/>
<circle cx="588.7" cy="115.9" r="2.4" fill="none" stroke="#666" stroke-width="1"/>
<circle cx="588.7" cy="115.9" r="5.6" fill="none" stroke="#f06a6a" stroke-width="0.8"/>
<path d="M628.0 44.7 L610.3 84.0" stroke="#f06a6a" stroke-width="1.0" fill="none"/>
<path d="M619.6 44.7 L586.8 98.0 L584.0 115.0" stroke="#f06a6a" stroke-width="1.0" fill="none"/>
<path d="M612.0 44.0 L600.0 60.0" stroke="#f06a6a" stroke-width="1.0" fill="none"/>
<path d="M592.0 140.0 L592.0 122.0" stroke="#f06a6a" stroke-width="1.0" fill="none"/>
<path d="M583.0 125.0 L583.8 135.0" stroke="#ec6cec" stroke-width="1.0" fill="none"/>
<path d="M618.7 55.9 L592.5 100.9" stroke="#10e010" stroke-width="3.6"/>
<rect x="-3.7" y="-5.7" width="7.4" height="11.4" fill="url(#hh)" transform="translate(594.3 66.3) rotate(30)"/>
<rect x="-4.6" y="-5.6" width="9.3" height="11.2" fill="url(#hh)" transform="translate(582.1 83.1) rotate(30)"/>
<rect x="-3.8" y="-4.8" width="7.5" height="9.6" fill="url(#hh)" transform="translate(573.8 100.8) rotate(20)"/>
<rect x="-5.7" y="-6.6" width="11.4" height="13.2" fill="url(#hh)" transform="translate(631.7 64.4) rotate(30)"/>
<rect x="-6.5" y="-5.8" width="13.0" height="11.5" fill="url(#hh)" transform="translate(651.5 71.8) rotate(30)"/>
<rect x="-4.7" y="-4.6" width="9.3" height="9.3" fill="url(#hh)" transform="translate(672.0 78.3) rotate(30)"/>
<rect x="-5.5" y="-5.6" width="11.0" height="11.3" fill="url(#hh)" transform="translate(695.5 84.9) rotate(30)"/>
<rect x="-6.5" y="-4.7" width="13.1" height="9.4" fill="url(#hh)" transform="translate(610.2 95.3) rotate(20)"/>
<rect x="-5.2" y="-3.8" width="10.4" height="7.5" fill="url(#hh)" transform="translate(632.2 98.0) rotate(20)"/>
<rect x="-6.6" y="-4.7" width="13.2" height="9.4" fill="url(#hh)" transform="translate(653.4 102.7) rotate(20)"/>
<rect x="-7.5" y="-5.6" width="15.0" height="11.2" fill="url(#hh)" transform="translate(674.9 107.4) rotate(30)"/>
<rect x="-6.5" y="-4.7" width="13.0" height="9.4" fill="url(#hh)" transform="translate(692.5 117.7) rotate(30)"/>
<rect x="-4.7" y="-5.6" width="9.4" height="11.2" fill="url(#hh)" transform="translate(720.7 96.2) rotate(30)"/>
<rect x="-5.0" y="-5.0" width="10.0" height="10.0" fill="url(#hh)" transform="translate(565.0 53.0) rotate(30)"/>
<circle cx="637.4" cy="105.6" r="2.8" fill="none" stroke="#f06a6a" stroke-width="1.1"/>
<circle cx="688" cy="89.6" r="2.8" fill="none" stroke="#f06a6a" stroke-width="1.1"/>
<circle cx="666.4" cy="112" r="2.2" fill="none" stroke="#f06a6a" stroke-width="1.1"/>
<rect x="644" y="106.5" width="5.6" height="8.5" fill="none" stroke="#f06a6a" stroke-width="1.1" stroke-dasharray="1 0.6"/>
<path d="M566.0 88.7 L555.0 111.0" stroke="#5ae2f6" stroke-width="1.0" fill="none"/>
<path d="M622.4 90.6 L620.6 115.0" stroke="#5ae2f6" stroke-width="1.0" fill="none"/>
<path d="M645.0 90.6 L640.0 115.0" stroke="#5ae2f6" stroke-width="1.0" fill="none"/>
<path d="M662.7 94.3 L652.4 120.5" stroke="#5ae2f6" stroke-width="1.0" fill="none"/>
<path d="M689.9 105.6 L682.4 122.4" stroke="#5ae2f6" stroke-width="1.0" fill="none"/>
<path d="M724.3 127.5 L713.0 148.0" stroke="#5ae2f6" stroke-width="1.0" fill="none"/>
<path d="M756.0 151.8 L745.0 170.5" stroke="#5ae2f6" stroke-width="1.0" fill="none"/>
<path d="M775.0 163.0 L763.7 180.0" stroke="#5ae2f6" stroke-width="1.0" fill="none"/>
<path d="M800.0 180.0 L790.0 195.0" stroke="#5ae2f6" stroke-width="1.0" fill="none"/>
<path d="M830.0 205.0 L818.0 222.0" stroke="#5ae2f6" stroke-width="1.0" fill="none"/>
<path d="M705.8 75.6 L704.8 98 M714.2 78.4 L709.5 101.8 M714 88 L724 88 M756 105 L755.3 131.2 M761.8 106.9 L758 136.8 M803 139.6 L797.4 165 M640 71 L643 85 M660 76 L662 90 M680 80 L676 95 M600 88 L598 100 M625 90 L627 104 M650 95 L648 115 M670 100 L664 118 M620 100 L612 112 M697 110 L690 125" stroke="#f06a6a" stroke-width="0.9" fill="none"/>
<path d="M605 74 L612 80 M632 82 L640 75 M652 88 L658 80" stroke="#f06a6a" stroke-width="0.9" fill="none" stroke-dasharray="2 1.5"/>
<path d="M601.8 82.9 L648.9 83.4 L677.8 89.1 L698.1 98.6 L723.0 114.0 L758.1 140.1 L802.1 171.5 L837.0 195.0 L882.0 225.0 L932.0 258.0 L963.0 279.0" stroke="#f06a6a" stroke-width="1.1" fill="none"/>
<path d="M601.8 90.1 L648.3 90.6 L675.6 95.9 L694.7 105.0 L719.0 120.0 L753.9 145.9 L797.9 177.5 L833.0 201.0 L878.0 231.0 L928.0 264.0 L959.0 285.0" stroke="#f06a6a" stroke-width="1.1" fill="none"/>
<path d="M743 134 L769.3 151.8" stroke="#10e010" stroke-width="3.8"/>
<path d="M952 287 L961 293" stroke="#10e010" stroke-width="3.8"/>
<rect x="-7.5" y="-4.6" width="15.0" height="9.3" fill="url(#hh)" transform="translate(716.5 98.3) rotate(30)"/>
<rect x="-4.9" y="-4.7" width="9.7" height="9.4" fill="url(#hh)" transform="translate(743.9 115.3) rotate(30)"/>
<rect x="-4.6" y="-6.6" width="9.3" height="13.1" fill="url(#hh)" transform="translate(768.4 130.2) rotate(20)"/>
<rect x="-3.9" y="-6.6" width="7.7" height="13.1" fill="url(#hh)" transform="translate(789.9 145.2) rotate(20)"/>
<rect x="-4.8" y="-6.5" width="9.5" height="13.1" fill="url(#hh)" transform="translate(815.2 163.9) rotate(20)"/>
<rect x="-5.7" y="-4.6" width="11.4" height="9.3" fill="url(#hh)" transform="translate(711.3 128.3) rotate(35)"/>
<rect x="-4.6" y="-4.7" width="9.3" height="9.3" fill="url(#hh)" transform="translate(727.1 139.7) rotate(35)"/>
<rect x="-5.7" y="-4.7" width="11.3" height="9.4" fill="url(#hh)" transform="translate(745.0 152.7) rotate(35)"/>
<rect x="-4.8" y="-5.7" width="9.6" height="11.4" fill="url(#hh)" transform="translate(760.8 166.7) rotate(35)"/>
<rect x="-4.5" y="-3.8" width="9.0" height="7.6" fill="url(#hh)" transform="translate(779.5 176.2) rotate(35)"/>
<rect x="-6.0" y="-5.0" width="12.0" height="10.0" fill="url(#hh)" transform="translate(796.0 190.0) rotate(35)"/>
<rect x="-5.0" y="-5.0" width="10.0" height="10.0" fill="url(#hh)" transform="translate(810.0 205.0) rotate(35)"/>
<rect x="-5.0" y="-6.5" width="10.0" height="13.0" fill="url(#hh)" transform="translate(855.0 181.5) rotate(30)"/>
<rect x="-6.5" y="-6.0" width="13.0" height="12.0" fill="url(#hh)" transform="translate(868.5 216.0) rotate(30)"/>
<rect x="-5.0" y="-5.0" width="10.0" height="10.0" fill="url(#hh)" transform="translate(893.0 195.0) rotate(30)"/>
<rect x="-5.0" y="-5.0" width="10.0" height="10.0" fill="url(#hh)" transform="translate(900.0 220.0) rotate(30)"/>
<rect x="-6.0" y="-5.0" width="12.0" height="10.0" fill="url(#hh)" transform="translate(906.0 250.0) rotate(30)"/>
<rect x="-6.5" y="-5.0" width="13.0" height="10.0" fill="url(#hh)" transform="translate(941.5 270.0) rotate(30)"/>
<rect x="-5.0" y="-5.0" width="10.0" height="10.0" fill="url(#hh)" transform="translate(945.0 250.0) rotate(30)"/>
<rect x="-5.0" y="-5.0" width="10.0" height="10.0" fill="url(#hh)" transform="translate(850.0 223.0) rotate(35)"/>
<rect x="-5.0" y="-4.0" width="10.0" height="8.0" fill="url(#hh)" transform="translate(815.0 224.0) rotate(30)"/>
<rect x="-4.0" y="-3.0" width="8.0" height="6.0" fill="url(#hh)" transform="translate(834.0 183.0) rotate(30)"/>
<path d="M810.5 136.8 Q815 144 836.7 144.3 M805 155.6 Q810 149 840.5 149 M872 205 L878.7 198.6 M860.3 213.7 L870.4 215.3 L880.4 198.6 M873.7 217 L888.8 198.6 M890 228 L900 212 M905 232 L915 215" stroke="#f06a6a" stroke-width="1" fill="none"/>
<path d="M912 200 L905 215 M925 215 L915 235 M940 225 L930 245" stroke="#f06a6a" stroke-width="0.9" fill="none"/>
<path d="M588.7 115.5 L685.6 127.3 L700.0 138.7 L748.7 170.5 L800.0 205.0 L825.0 222.0 L880.0 255.0 L930.0 303.7 L961.0 327.5" stroke="#6262ee" stroke-width="1.0" fill="none"/>
<path d="M700.0 148.0 L754.0 178.0 L800.0 208.6 L825.0 227.0 L880.0 262.0 L930.0 325.0 L961.0 340.0" stroke="#ec6cec" stroke-width="1.0" fill="none"/>
<path d="M930.0 325.0 L961.0 340.0" stroke="#f06a6a" stroke-width="1.0" fill="none"/>
<path d="M660.0 132.0 L690.0 140.0 L720.0 150.0 L745.0 165.0" stroke="#5ae2f6" stroke-width="1" fill="none" stroke-dasharray="5 3"/>
<rect x="-7.5" y="-10.0" width="15.0" height="20.0" fill="url(#hh)" transform="translate(937.5 260.0) rotate(35)"/>
<rect x="-6.2" y="-6.2" width="12.5" height="12.5" fill="url(#hh)" transform="translate(951.2 268.8) rotate(35)"/>
<rect x="-7.5" y="-7.5" width="15.0" height="15.0" fill="url(#hh)" transform="translate(940.0 295.0) rotate(35)"/>
<rect x="-6.2" y="-6.2" width="12.5" height="12.5" fill="url(#hh)" transform="translate(953.8 303.8) rotate(35)"/>
<path d="M930.0 270.0 L961.0 292.5" stroke="#f06a6a" stroke-width="1.0" fill="none"/>
<path d="M930.0 280.0 L961.0 301.0" stroke="#f06a6a" stroke-width="1.0" fill="none"/>
<path d="M942 252 L950 252 L947 260 M935 280 L940 272" stroke="#f06a6a" stroke-width="0.9" fill="none"/>
<path d="M941.0 292.0 L935.0 305.0" stroke="#5ae2f6" stroke-width="1.0" fill="none"/>
<path d="M952.0 298.0 L945.0 310.0" stroke="#5ae2f6" stroke-width="1.0" fill="none"/>
<path d="M960.0 305.0 L953.0 320.0" stroke="#5ae2f6" stroke-width="1.0" fill="none"/>
<path d="M930 322.5 Q945 328 961 340 M930 327 Q945 333 961 345" stroke="#f06a6a" stroke-width="1" fill="none"/>
<path d="M930 330 L940 337.5 L935 345 L947.5 350 L942.5 370 L957.5 372.5 L961 355 M932 333 L942 339 L938 346 L950 352 L945 368 L956 370 L959 356" stroke="#ec6cec" stroke-width="1.1" fill="none"/>
<path d="M930 407.5 L936 412.5 L932.5 420 M948.75 420 L960 420 L961 440 L950 442.5 L948.75 432.5 Z" stroke="#ec6cec" stroke-width="1.1" fill="none"/>
<path d="M930 472.5 L940 470 L957.5 460 L961 472.5 L957.5 480 L935 482" stroke="#ec6cec" stroke-width="1.3" fill="none"/>
<path d="M935 478 L955 470" stroke="#f06a6a" stroke-width="1.5" fill="none" stroke-dasharray="1 1"/>
<path d="M930 485 Q945 495 957.5 510 L961 515" stroke="#ec6cec" stroke-width="1.1" fill="none"/>
<path d="M932.5 515 L940 512.5 L947.5 510 L957.5 520 L952.5 530 L940 540 L932.5 550 M935 518 L955 522 L950 530" stroke="#ec6cec" stroke-width="1.1" fill="none"/>
<rect x="955" y="526" width="6" height="9" fill="none" stroke="#10e010" stroke-width="1"/>
<path d="M940.0 520.0 L946.0 523.0" stroke="#10e010" stroke-width="1.2" fill="none"/>
<path d="M930 430 L941 442 L930 467 Z" fill="#10e010"/>
<path d="M932.0 467.0 L942.0 445.0" stroke="#5ae2f6" stroke-width="1" fill="none" stroke-dasharray="1.5 1"/>
<path d="M671.7 170 L700 162 L756 214 L748 229 L661 229 L663.3 218.3 L673.3 186.7 Z" fill="url(#xh)" stroke="#5ae2f6" stroke-width="1" stroke-dasharray="1.5 1"/>
<path d="M679.0 182.5 L683.3 195.0" stroke="#10e010" stroke-width="1.2" fill="none"/>
<path d="M675.0 182.0 L680.0 182.0" stroke="#10e010" stroke-width="1.2" fill="none"/>
<g fill="#10e010"><rect x="689" y="181" width="10" height="3"/><rect x="760" y="224" width="9" height="4"/></g>
<path d="M740.0 228.0 L756.0 222.0" stroke="#10e010" stroke-width="1" fill="none"/>
<path d="M561.7 168.3 L635 171.3 L633.3 218.3 L560 215.8 Z" stroke="#ec6cec" stroke-width="1.0" fill="none"/>
<path d="M554 183.3 L570 151.7 L618.3 164.2 Q590 215 554 183.3" stroke="#ec6cec" stroke-width="1.0" fill="none"/>
<path d="M560 215.8 Q600 170 655 193.3 L633 232" stroke="#ec6cec" stroke-width="1.0" fill="none"/>
<path d="M583.3 135 L656.7 176.7 Q665 183 663.3 203.3 Q660 215 653.3 220 L655 229" stroke="#ec6cec" stroke-width="1.0" fill="none"/>
<path d="M586 133 L659 174 Q668 181 666.5 203.3 Q663 217 656.5 221 L658 229" stroke="#ec6cec" stroke-width="1.0" fill="none"/>
<circle cx="580" cy="150.8" r="10" fill="none" stroke="#ec6cec"/>
<rect x="-5.5" y="-5.5" width="11" height="11" fill="none" stroke="#ec6cec" transform="translate(580 150.8) rotate(30)"/>
<circle cx="579.5" cy="150.5" r="1.5" fill="none" stroke="#ec6cec"/>
<path d="M540 123.3 L585 121.7 L628 126.7 L633 123.3" stroke="#ec6cec" stroke-width="1.0" fill="none"/>
<path d="M540 229 Q570 220 600 229" stroke="#ec6cec" stroke-width="1.0" fill="none"/>
<path d="M591.0 162.8H598.3 M599.7 162.8H600.0" stroke="#10e010" stroke-width="1.25" stroke-dasharray="1 0.4"/>
<path d="M589.0 165.2H601.3" stroke="#10e010" stroke-width="1.25" stroke-dasharray="1 0.4"/>
<path d="M618.0 175.8H624.3" stroke="#10e010" stroke-width="1.25" stroke-dasharray="1 0.4"/>
<path d="M616.0 178.2H623.2 M624.6 178.2H627.0" stroke="#10e010" stroke-width="1.25" stroke-dasharray="1 0.4"/>
<path d="M583.0 220.8H589.1 M590.6 220.8H593.0" stroke="#10e010" stroke-width="1.25" stroke-dasharray="1 0.4"/>
<path d="M581.0 223.2H589.3 M590.2 223.2H595.0" stroke="#10e010" stroke-width="1.25" stroke-dasharray="1 0.4"/>
<path d="M598.0 145.0 Q607.2 148.4 615.0 150.0 Q623.3 152.7 633.0 153.0 Q640.6 155.7 645.0 162.0 Q649.5 162.6 656.0 167.0 Q662.9 167.5 670.0 168.0 Q679.0 164.0 690.0 160.0" stroke="#d9d9d9" stroke-width="2.4" fill="none" stroke-dasharray="1.3 0.9"/>
<path d="M640 172 L668 183 M690 230 L700 212" stroke="#d0d0d0" stroke-width="1" fill="none" stroke-dasharray="4 3"/>
<circle cx="835.2" cy="197.7" r="15.9" fill="none" stroke="#222" stroke-width="1.4"/>
<path d="M845.2 186.0 L862.8 171.8 L868.7 171.8" stroke="#222" stroke-width="1.2" fill="none"/>
<text x="876.0" y="170.6" font-family="Liberation Sans" font-size="4.3" font-weight="bold" fill="#222" textLength="16.0" lengthAdjust="spacingAndGlyphs">SPACES</text>
<text x="880.0" y="173.6" font-family="Liberation Sans" font-size="4.3" font-weight="bold" fill="#222" textLength="8.0" lengthAdjust="spacingAndGlyphs">DEPTH</text>
<text x="874.0" y="176.6" font-family="Liberation Sans" font-size="4.3" font-weight="bold" fill="#222" textLength="19.0" lengthAdjust="spacingAndGlyphs">DEPTH NO</text>
<text x="874.0" y="179.6" font-family="Liberation Sans" font-size="4.3" font-weight="bold" fill="#222" textLength="21.0" lengthAdjust="spacingAndGlyphs">BY MINIMUM</text>
<rect x="736.5" y="53.5" width="163.5" height="39" fill="none" stroke="#222" stroke-width="1.4"/>
<line x1="861.5" y1="53.5" x2="861.5" y2="92.5" stroke="#222" stroke-width="1.4"/>
<rect x="738.5" y="55.5" width="121" height="35.5" fill="none" stroke="#10e010" stroke-width="1.2"/>
<path d="M741.0 59.0H752.3 M753.2 59.0H760.8 M761.7 59.0H775.3 M776.5 59.0H787.4 M788.3 59.0H799.0" stroke="#5ae2f6" stroke-width="1.875" stroke-dasharray="1 0.4"/>
<path d="M741.0 62.0H746.1 M747.1 62.0H752.3 M753.2 62.0H760.2 M761.2 62.0H773.0 M774.5 62.0H781.0 M782.0 62.0H791.0" stroke="#5ae2f6" stroke-width="1.875" stroke-dasharray="1 0.4"/>
<path d="M741.0 65.0H749.2 M750.3 65.0H759.7 M760.6 65.0H773.4 M774.9 65.0H783.9 M785.4 65.0H797.9 M799.3 65.0H806.0" stroke="#5ae2f6" stroke-width="1.875" stroke-dasharray="1 0.4"/>
<path d="M741.0 68.0H749.5 M750.4 68.0H756.8 M758.3 68.0H768.7 M769.7 68.0H781.5 M783.0 68.0H789.6 M791.0 68.0H801.2 M802.3 68.0H803.0" stroke="#5ae2f6" stroke-width="1.875" stroke-dasharray="1 0.4"/>
<path d="M741.0 71.0H749.9 M751.1 71.0H763.5 M764.7 71.0H777.1 M777.9 71.0H785.7 M787.2 71.0H797.6 M799.0 71.0H801.0" stroke="#5ae2f6" stroke-width="1.875" stroke-dasharray="1 0.4"/>
<path d="M741.0 74.0H749.0 M750.5 74.0H757.4 M758.8 74.0H766.7 M768.2 74.0H776.1 M777.3 74.0H781.0" stroke="#5ae2f6" stroke-width="1.875" stroke-dasharray="1 0.4"/>
<path d="M827.0 63.0H838.2" stroke="#5ae2f6" stroke-width="1.75" stroke-dasharray="1 0.4"/>
<path d="M805.0 84.8 L851.0 84.8" stroke="#10e010" stroke-width="1" fill="none"/>
<path d="M824.0 87.5 L832.0 87.5" stroke="#5ae2f6" stroke-width="1.6" fill="none"/>
<text x="0" y="0" font-family="Liberation Sans" font-size="16" font-weight="bold" fill="#5ae2f6" transform="translate(883 118) rotate(-45)">N</text>
<path d="M893 118.7 L922 146.5 L916.5 151.5 Z" fill="#5ae2f6"/>
<path d="M920 149 L948.5 177 Q951 183 945 182.5 L918 152 Z" fill="#5ae2f6"/>
<path d="M915.5 154.4 L925.4 146.5" stroke="#5ae2f6" stroke-width="1.6" fill="none"/>
<path d="M914.9 128.6 L920.1 133.9" stroke="#5ae2f6" stroke-width="1.6" fill="none"/>
<path d="M937.3 155.7 L941.9 160.3" stroke="#5ae2f6" stroke-width="1.6" fill="none"/>
<text x="953" y="147.5" font-family="Liberation Sans" font-size="7.5" font-weight="bold" fill="#222">PL</text>
<g fill="#222"><rect x="952" y="142" width="0" height="0"/><rect x="953" y="156.5" width="3" height="2"/><rect x="954" y="176.5" width="3" height="2"/><rect x="954.5" y="196.7" width="3" height="2"/><rect x="954.5" y="216.9" width="3" height="2"/><rect x="954.5" y="237" width="3" height="2"/></g>
<path d="M952.0 148.5 L961.0 148.5" stroke="#222" stroke-width="0.8" fill="none"/>
<text x="371" y="462" font-family="Liberation Sans" font-size="8" font-weight="bold" fill="#111" textLength="24" lengthAdjust="spacingAndGlyphs">NOTES:</text>
<path d="M371.0 463.5 L395.0 463.5" stroke="#111" stroke-width="0.8" fill="none"/>
<text x="384.0" y="471.0" font-family="Liberation Sans" font-size="4.3" font-weight="bold" fill="#262626" textLength="22.0" lengthAdjust="spacingAndGlyphs">SPACE PROPOSED</text>
<text x="396.0" y="474.6" font-family="Liberation Sans" font-size="4.3" font-weight="bold" fill="#262626" textLength="50.0" lengthAdjust="spacingAndGlyphs">DRAINAGE BUILDING</text>
<text x="396.0" y="478.3" font-family="Liberation Sans" font-size="4.3" font-weight="bold" fill="#262626" textLength="50.0" lengthAdjust="spacingAndGlyphs">AREA STREET SPACE</text>
<text x="396.0" y="482.2" font-family="Liberation Sans" font-size="4.3" font-weight="bold" fill="#262626" textLength="50.0" lengthAdjust="spacingAndGlyphs">LOT TO LANDSCAPE LANDSCAPE</text>
<text x="384.0" y="491.1" font-family="Liberation Sans" font-size="4.3" font-weight="bold" fill="#262626" textLength="67.0" lengthAdjust="spacingAndGlyphs">ALL LANDSCAPE BY STREET</text>
<text x="396.0" y="495.0" font-family="Liberation Sans" font-size="4.3" font-weight="bold" fill="#262626" textLength="55.0" lengthAdjust="spacingAndGlyphs">FT PLAN APPROVAL MINIMUM</text>
<text x="396.0" y="499.1" font-family="Liberation Sans" font-size="4.3" font-weight="bold" fill="#262626" textLength="55.0" lengthAdjust="spacingAndGlyphs">LANDSCAPE PLAN REQUIRED</text>
<text x="396.0" y="502.9" font-family="Liberation Sans" font-size="4.3" font-weight="bold" fill="#262626" textLength="55.0" lengthAdjust="spacingAndGlyphs">CITY FT MINIMUM BOARD</text>
<text x="396.0" y="507.1" font-family="Liberation Sans" font-size="4.3" font-weight="bold" fill="#262626" textLength="55.0" lengthAdjust="spacingAndGlyphs">BOARD TO DRAINAGE ACRES</text>
<text x="396.0" y="511.2" font-family="Liberation Sans" font-size="4.3" font-weight="bold" fill="#262626" textLength="55.0" lengthAdjust="spacingAndGlyphs">ALL AREA SPACE BE REQUIRED</text>
<text x="396.0" y="515.1" font-family="Liberation Sans" font-size="4.3" font-weight="bold" fill="#262626" textLength="55.0" lengthAdjust="spacingAndGlyphs">PLANNING MINIMUM ACRES</text>
<text x="396.0" y="518.9" font-family="Liberation Sans" font-size="4.3" font-weight="bold" fill="#262626" textLength="55.0" lengthAdjust="spacingAndGlyphs">ALL IN LIGHTING OF</text>
<text x="384.0" y="527.2" font-family="Liberation Sans" font-size="4.3" font-weight="bold" fill="#262626" textLength="67.0" lengthAdjust="spacingAndGlyphs">FT REQUIRED PROPOSED REQUIRED</text>
<text x="384.0" y="535.2" font-family="Liberation Sans" font-size="4.3" font-weight="bold" fill="#262626" textLength="111.0" lengthAdjust="spacingAndGlyphs">TO PARKING TO DEPTH AND BUILDING TO ALL</text>
<text x="384.0" y="539.0" font-family="Liberation Sans" font-size="4.3" font-weight="bold" fill="#262626" textLength="36.0" lengthAdjust="spacingAndGlyphs">ON IN CITY AND</text>
<text x="384.0" y="547.0" font-family="Liberation Sans" font-size="4.3" font-weight="bold" fill="#262626" textLength="121.0" lengthAdjust="spacingAndGlyphs">IN LIGHTING LOT AREA ZONING SPACE PARKING</text>
<text x="400.0" y="551.2" font-family="Liberation Sans" font-size="4.3" font-weight="bold" fill="#262626" textLength="105.0" lengthAdjust="spacingAndGlyphs">DRAINAGE STREET SPACES PARKING PARKING</text>
<text x="400.0" y="555.0" font-family="Liberation Sans" font-size="4.3" font-weight="bold" fill="#262626" textLength="40.0" lengthAdjust="spacingAndGlyphs">BY WITH ZONING</text>
<text x="384.0" y="563.0" font-family="Liberation Sans" font-size="4.3" font-weight="bold" fill="#262626" textLength="14.0" lengthAdjust="spacingAndGlyphs">ZONING</text>
<text x="393.0" y="567.2" font-family="Liberation Sans" font-size="4.3" font-weight="bold" fill="#262626" textLength="17.0" lengthAdjust="spacingAndGlyphs">REQUIRED</text>
<text x="400.0" y="571.0" font-family="Liberation Sans" font-size="4.3" font-weight="bold" fill="#262626" textLength="105.0" lengthAdjust="spacingAndGlyphs">OF NO SHALL TREES AS SPACES THE PLAN</text>
<text x="400.0" y="575.1" font-family="Liberation Sans" font-size="4.3" font-weight="bold" fill="#262626" textLength="105.0" lengthAdjust="spacingAndGlyphs">TO DRAINAGE REQUIRED ON ALL SPACE LANDSCAPE</text>
<text x="400.0" y="579.6" font-family="Liberation Sans" font-size="4.3" font-weight="bold" fill="#262626" textLength="105.0" lengthAdjust="spacingAndGlyphs">THE FOR TREES TREES CITY LOT PLANNING</text>
<text x="393.0" y="587.9" font-family="Liberation Sans" font-size="4.3" font-weight="bold" fill="#262626" textLength="16.0" lengthAdjust="spacingAndGlyphs">ON PLAN</text>
<text x="400.0" y="591.6" font-family="Liberation Sans" font-size="4.3" font-weight="bold" fill="#262626" textLength="92.0" lengthAdjust="spacingAndGlyphs">BY PLANNING BUILDING SITE PLAN LIGHTING</text>
<text x="400.0" y="595.6" font-family="Liberation Sans" font-size="4.3" font-weight="bold" fill="#262626" textLength="92.0" lengthAdjust="spacingAndGlyphs">SPACE ACRES DEPTH BE SYSTEM PROPOSED</text>
<text x="400.0" y="599.6" font-family="Liberation Sans" font-size="4.3" font-weight="bold" fill="#262626" textLength="92.0" lengthAdjust="spacingAndGlyphs">FOR PROPOSED IN CITY BOARD BE DRAINAGE</text>
<text x="384.0" y="607.6" font-family="Liberation Sans" font-size="4.3" font-weight="bold" fill="#262626" textLength="46.0" lengthAdjust="spacingAndGlyphs">ALL FT SYSTEM SHALL</text>
<text x="396.0" y="611.6" font-family="Liberation Sans" font-size="4.3" font-weight="bold" fill="#262626" textLength="34.0" lengthAdjust="spacingAndGlyphs">BUILDING AND</text>
<text x="396.0" y="615.6" font-family="Liberation Sans" font-size="4.3" font-weight="bold" fill="#262626" textLength="34.0" lengthAdjust="spacingAndGlyphs">APPROVAL BOARD</text>
<text x="384.0" y="623.6" font-family="Liberation Sans" font-size="4.3" font-weight="bold" fill="#262626" textLength="121.0" lengthAdjust="spacingAndGlyphs">SPACES SITE FT LOT SF SYSTEM SF OPEN AREA</text>
<text x="384.0" y="627.6" font-family="Liberation Sans" font-size="4.3" font-weight="bold" fill="#262626" textLength="121.0" lengthAdjust="spacingAndGlyphs">SIGNAGE BOARD DEPTH STREET BOARD PROPOSED</text>
<text x="384.0" y="631.6" font-family="Liberation Sans" font-size="4.3" font-weight="bold" fill="#262626" textLength="121.0" lengthAdjust="spacingAndGlyphs">ON PROVIDED PROVIDED SYSTEM FRONT ZONING STREET</text>
<text x="384.0" y="635.6" font-family="Liberation Sans" font-size="4.3" font-weight="bold" fill="#262626" textLength="106.0" lengthAdjust="spacingAndGlyphs">PARKING AS PROVIDED TO SYSTEM AREA STREET</text>
<text x="384.0" y="643.6" font-family="Liberation Sans" font-size="4.3" font-weight="bold" fill="#262626" textLength="121.0" lengthAdjust="spacingAndGlyphs">BE SITE WITH PLAN SPACE SPACE DEPTH BE AS</text>
<text x="384.0" y="647.6" font-family="Liberation Sans" font-size="4.3" font-weight="bold" fill="#262626" textLength="121.0" lengthAdjust="spacingAndGlyphs">LOT THE SYSTEM LANDSCAPE SIGNAGE LOT TREES</text>
<text x="384.0" y="651.6" font-family="Liberation Sans" font-size="4.3" font-weight="bold" fill="#262626" textLength="56.0" lengthAdjust="spacingAndGlyphs">SF PLANNING TREES PLANNING</text>
<text x="384.0" y="659.6" font-family="Liberation Sans" font-size="4.3" font-weight="bold" fill="#262626" textLength="111.0" lengthAdjust="spacingAndGlyphs">BUILDING CITY FRONT SPACE WITH ON NO DEPTH</text>
<text x="384.0" y="663.6" font-family="Liberation Sans" font-size="4.3" font-weight="bold" fill="#262626" textLength="111.0" lengthAdjust="spacingAndGlyphs">SPACE REQUIRED BE CITY MINIMUM BOARD THE</text>
<path d="M372.0 469.4 L375.0 469.4" stroke="#333" stroke-width="1.3" fill="none"/>
<path d="M372.0 489.5 L375.0 489.5" stroke="#333" stroke-width="1.3" fill="none"/>
<path d="M372.0 525.6 L375.0 525.6" stroke="#333" stroke-width="1.3" fill="none"/>
<path d="M372.0 533.6 L375.0 533.6" stroke="#333" stroke-width="1.3" fill="none"/>
<path d="M372.0 545.4 L375.0 545.4" stroke="#333" stroke-width="1.3" fill="none"/>
<path d="M372.0 561.4 L375.0 561.4" stroke="#333" stroke-width="1.3" fill="none"/>
<path d="M372.0 606.0 L375.0 606.0" stroke="#333" stroke-width="1.3" fill="none"/>
<path d="M372.0 622.0 L375.0 622.0" stroke="#333" stroke-width="1.3" fill="none"/>
<path d="M372.0 642.0 L375.0 642.0" stroke="#333" stroke-width="1.3" fill="none"/>
<path d="M372.0 658.0 L375.0 658.0" stroke="#333" stroke-width="1.3" fill="none"/>
<path d="M396.0 474.9 L446.0 474.9" stroke="#333" stroke-width="0.7" fill="none"/>
<path d="M400.0 575.5 L505.0 575.5" stroke="#333" stroke-width="0.7" fill="none"/>
<path d="M400.0 592.0 L492.0 592.0" stroke="#333" stroke-width="0.7" fill="none"/>
<text x="535.5" y="532.1" font-family="Liberation Sans" font-size="4.3" font-weight="bold" fill="#262626" textLength="96.5" lengthAdjust="spacingAndGlyphs">SITE CITY WITH TO SPACES DEPTH NO</text>
<text x="535.5" y="539.9" font-family="Liberation Sans" font-size="4.3" font-weight="bold" fill="#262626" textLength="116.5" lengthAdjust="spacingAndGlyphs">SPACE AND SYSTEM AN DRAINAGE TO FT REQUIRED</text>
<text x="535.5" y="543.9" font-family="Liberation Sans" font-size="4.3" font-weight="bold" fill="#262626" textLength="116.5" lengthAdjust="spacingAndGlyphs">OPEN PROPOSED ALL APPROVAL TREES APPROVAL</text>
<text x="535.5" y="548.0" font-family="Liberation Sans" font-size="4.3" font-weight="bold" fill="#262626" textLength="116.5" lengthAdjust="spacingAndGlyphs">BY TO SIGNAGE SITE SHALL REQUIRED TREES SPACE</text>
<text x="535.5" y="551.7" font-family="Liberation Sans" font-size="4.3" font-weight="bold" fill="#262626" textLength="24.5" lengthAdjust="spacingAndGlyphs">ZONING PLANNING</text>
<text x="535.5" y="559.6" font-family="Liberation Sans" font-size="4.3" font-weight="bold" fill="#262626" textLength="116.5" lengthAdjust="spacingAndGlyphs">PROPOSED BUILDING PROPOSED STREET OF PROVIDED</text>
<text x="535.5" y="563.6" font-family="Liberation Sans" font-size="4.3" font-weight="bold" fill="#262626" textLength="116.5" lengthAdjust="spacingAndGlyphs">PROPOSED DRAINAGE AS OF LANDSCAPE OF BY WITH</text>
<text x="535.5" y="567.6" font-family="Liberation Sans" font-size="4.3" font-weight="bold" fill="#262626" textLength="54.5" lengthAdjust="spacingAndGlyphs">AND AS STREET BY DRAINAGE</text>
<text x="535.5" y="575.2" font-family="Liberation Sans" font-size="4.3" font-weight="bold" fill="#262626" textLength="116.5" lengthAdjust="spacingAndGlyphs">FOR IN SIGNAGE THE PLAN SYSTEM LOT ACRES</text>
<text x="535.5" y="579.0" font-family="Liberation Sans" font-size="4.3" font-weight="bold" fill="#262626" textLength="116.5" lengthAdjust="spacingAndGlyphs">MINIMUM FOR DRAINAGE THE SITE NO CITY ACRES</text>
<text x="535.5" y="582.9" font-family="Liberation Sans" font-size="4.3" font-weight="bold" fill="#262626" textLength="116.5" lengthAdjust="spacingAndGlyphs">ON PLAN REQUIRED PROPOSED PARKING STREET</text>
<text x="535.5" y="586.8" font-family="Liberation Sans" font-size="4.3" font-weight="bold" fill="#262626" textLength="116.5" lengthAdjust="spacingAndGlyphs">PROVIDED AS TO FRONT APPROVAL APPROVAL PLAN</text>
<text x="535.5" y="590.4" font-family="Liberation Sans" font-size="4.3" font-weight="bold" fill="#262626" textLength="34.5" lengthAdjust="spacingAndGlyphs">FOR PARKING</text>
<text x="535.5" y="595.2" font-family="Liberation Sans" font-size="4.3" font-weight="bold" fill="#262626" textLength="116.5" lengthAdjust="spacingAndGlyphs">PROPOSED DEPTH MINIMUM SYSTEM ON PARKING</text>
<text x="535.5" y="599.1" font-family="Liberation Sans" font-size="4.3" font-weight="bold" fill="#262626" textLength="64.5" lengthAdjust="spacingAndGlyphs">SIGNAGE PLAN TO AND CITY</text>
<text x="535.5" y="602.6" font-family="Liberation Sans" font-size="4.3" font-weight="bold" fill="#262626" textLength="116.5" lengthAdjust="spacingAndGlyphs">NO AND WITH BY ON BOARD BOARD APPROVAL STREET</text>
<text x="535.5" y="606.6" font-family="Liberation Sans" font-size="4.3" font-weight="bold" fill="#262626" textLength="54.5" lengthAdjust="spacingAndGlyphs">SHALL DRAINAGE FT TO</text>
<text x="535.5" y="610.6" font-family="Liberation Sans" font-size="4.3" font-weight="bold" fill="#262626" textLength="116.5" lengthAdjust="spacingAndGlyphs">AND AREA SHALL PLANNING FOR LIGHTING TREES</text>
<text x="535.5" y="614.6" font-family="Liberation Sans" font-size="4.3" font-weight="bold" fill="#262626" textLength="116.5" lengthAdjust="spacingAndGlyphs">OF PARKING LIGHTING OPEN WITH IN SITE CITY</text>
<text x="535.5" y="618.6" font-family="Liberation Sans" font-size="4.3" font-weight="bold" fill="#262626" textLength="64.5" lengthAdjust="spacingAndGlyphs">AN PLAN SYSTEM PARKING</text>
<text x="535.5" y="622.6" font-family="Liberation Sans" font-size="4.3" font-weight="bold" fill="#262626" textLength="116.5" lengthAdjust="spacingAndGlyphs">TREES NO THE STREET NO AN BUILDING LOT AS</text>
<text x="535.5" y="626.4" font-family="Liberation Sans" font-size="4.3" font-weight="bold" fill="#262626" textLength="116.5" lengthAdjust="spacingAndGlyphs">SF SPACE ALL FRONT PARKING APPROVAL PARKING</text>
<text x="535.5" y="630.3" font-family="Liberation Sans" font-size="4.3" font-weight="bold" fill="#262626" textLength="104.5" lengthAdjust="spacingAndGlyphs">PROPOSED IN SIGNAGE AND PROVIDED PLAN</text>
<text x="535.5" y="634.6" font-family="Liberation Sans" font-size="4.3" font-weight="bold" fill="#262626" textLength="116.5" lengthAdjust="spacingAndGlyphs">SITE OPEN PARKING ACRES AND NO PLANNING FRONT</text>
<text x="535.5" y="638.2" font-family="Liberation Sans" font-size="4.3" font-weight="bold" fill="#262626" textLength="116.5" lengthAdjust="spacingAndGlyphs">REQUIRED PROPOSED PROVIDED AREA SPACES NO</text>
<text x="535.5" y="642.1" font-family="Liberation Sans" font-size="4.3" font-weight="bold" fill="#262626" textLength="84.5" lengthAdjust="spacingAndGlyphs">OPEN OPEN CITY MINIMUM APPROVAL</text>
<text x="535.5" y="646.4" font-family="Liberation Sans" font-size="4.3" font-weight="bold" fill="#262626" textLength="116.5" lengthAdjust="spacingAndGlyphs">SPACE APPROVAL MINIMUM ALL ON AS APPROVAL</text>
<text x="535.5" y="650.1" font-family="Liberation Sans" font-size="4.3" font-weight="bold" fill="#262626" textLength="116.5" lengthAdjust="spacingAndGlyphs">TO WITH LOT SYSTEM MINIMUM TREES AN PARKING</text>
<text x="535.5" y="653.9" font-family="Liberation Sans" font-size="4.3" font-weight="bold" fill="#262626" textLength="116.5" lengthAdjust="spacingAndGlyphs">PARKING TO LANDSCAPE DEPTH DRAINAGE FOR SIGNAGE</text>
<text x="535.5" y="657.6" font-family="Liberation Sans" font-size="4.3" font-weight="bold" fill="#262626" textLength="44.5" lengthAdjust="spacingAndGlyphs">WITH LOT MINIMUM</text>
<text x="535.5" y="661.9" font-family="Liberation Sans" font-size="4.3" font-weight="bold" fill="#262626" textLength="116.5" lengthAdjust="spacingAndGlyphs">REQUIRED REQUIRED PROVIDED OF PROVIDED FRONT</text>
<path d="M522.0 538.3 L527.0 538.3" stroke="#333" stroke-width="1.3" fill="none"/>
<path d="M522.0 558.0 L527.0 558.0" stroke="#333" stroke-width="1.3" fill="none"/>
<path d="M522.0 573.6 L527.0 573.6" stroke="#333" stroke-width="1.3" fill="none"/>
<path d="M522.0 593.6 L527.0 593.6" stroke="#333" stroke-width="1.3" fill="none"/>
<path d="M522.0 601.0 L527.0 601.0" stroke="#333" stroke-width="1.3" fill="none"/>
<path d="M522.0 609.0 L527.0 609.0" stroke="#333" stroke-width="1.3" fill="none"/>
<path d="M522.0 621.0 L527.0 621.0" stroke="#333" stroke-width="1.3" fill="none"/>
<path d="M522.0 633.0 L527.0 633.0" stroke="#333" stroke-width="1.3" fill="none"/>
<path d="M522.0 644.8 L527.0 644.8" stroke="#333" stroke-width="1.3" fill="none"/>
<path d="M522.0 660.3 L527.0 660.3" stroke="#333" stroke-width="1.3" fill="none"/>
<rect x="669.2" y="560" width="119.1" height="34.6" fill="none" stroke="#333" stroke-width="1.3"/>
<path d="M671.7 564.8H678.2 M679.6 564.8H692.7 M693.8 564.8H700.1 M701.6 564.8H706.6 M708.0 564.8H716.3 M717.7 564.8H725.9 M726.9 564.8H736.0" stroke="#5ae2f6" stroke-width="1.75" stroke-dasharray="1 0.4"/>
<path d="M671.7 569.0H680.8 M681.9 569.0H694.0 M695.5 569.0H709.5 M710.4 569.0H722.2 M723.7 569.0H736.0" stroke="#5ae2f6" stroke-width="1.75" stroke-dasharray="1 0.4"/>
<path d="M671.7 572.0H682.5 M683.9 572.0H690.3 M691.4 572.0H696.7 M697.9 572.0H704.0 M705.1 572.0H713.2 M714.1 572.0H721.3 M722.8 572.0H728.3 M729.7 572.0H736.0" stroke="#5ae2f6" stroke-width="1.75" stroke-dasharray="1 0.4"/>
<path d="M671.7 575.6H680.3 M681.5 575.6H687.4 M688.5 575.6H701.6 M703.1 575.6H710.0" stroke="#5ae2f6" stroke-width="1.75" stroke-dasharray="1 0.4"/>
<path d="M671.7 586.3 L750.8 586.3" stroke="#10e010" stroke-width="1" fill="none"/>
<path d="M754.0 586.3 L780.0 586.3" stroke="#10e010" stroke-width="1" fill="none"/>
<path d="M672.7 590.8H680.2 M681.7 590.8H690.9 M692.4 590.8H703.7 M705.1 590.8H711.2 M712.1 590.8H717.5" stroke="#5ae2f6" stroke-width="1.5" stroke-dasharray="1 0.4"/>
<path d="M763.0 587.7 L770.0 587.7" stroke="#5ae2f6" stroke-width="1.2" fill="none"/>
<path d="M674.8 610.6H684.5 M685.6 610.6H690.8 M692.4 610.6H700.0 M701.3 610.6H710.2 M711.3 610.6H719.2 M720.7 610.6H733.6 M735.1 610.6H742.3 M743.8 610.6H751.0 M752.5 610.6H766.2 M767.4 610.6H773.3 M774.9 610.6H784.8" stroke="#10e010" stroke-width="2.0" stroke-dasharray="1 0.4"/>
<path d="M674.8 613.8H688.3 M689.8 613.8H703.8 M705.1 613.8H718.0 M719.1 613.8H729.0 M730.2 613.8H736.7 M738.0 613.8H746.8 M747.7 613.8H753.4 M754.6 613.8H760.8 M762.3 613.8H772.5 M773.6 613.8H781.3 M782.7 613.8H786.0" stroke="#10e010" stroke-width="2.0" stroke-dasharray="1 0.4"/>
<path d="M674.8 616.9H683.8 M684.9 616.9H694.7 M695.6 616.9H706.8 M707.8 616.9H715.6 M716.7 616.9H724.6 M725.6 616.9H731.9 M733.3 616.9H745.3 M746.8 616.9H753.7 M755.1 616.9H766.4 M767.2 616.9H775.1 M776.6 616.9H786.0" stroke="#10e010" stroke-width="2.0" stroke-dasharray="1 0.4"/>
<path d="M674.8 619.6H685.5 M686.9 619.6H696.9 M698.1 619.6H705.3 M706.8 619.6H720.6 M721.9 619.6H729.7 M731.1 619.6H744.8 M745.8 619.6H750.8" stroke="#10e010" stroke-width="2.0" stroke-dasharray="1 0.4"/>
<rect x="669.2" y="623.1" width="123.3" height="39.6" fill="none" stroke="#333" stroke-width="1.4"/>
<rect x="670.8" y="625.2" width="120.5" height="36" fill="none" stroke="#10e010" stroke-width="1.1"/>
<rect x="679" y="632.5" width="93.7" height="5.2" fill="#10e010"/>
<path d="M706.0 630.0H714.0 M715.6 630.0H727.6 M728.7 630.0H735.2 M736.7 630.0H742.8 M744.2 630.0H751.6 M753.0 630.0H754.0" stroke="#10e010" stroke-width="2.75" stroke-dasharray="1 0.4"/>
<path d="M679.0 646.0 L755.0 646.0" stroke="#10e010" stroke-width="1" fill="none"/>
<path d="M763.3 646.0 L782.5 646.0" stroke="#10e010" stroke-width="1" fill="none"/>
<path d="M679.0 656.5 L755.0 656.5" stroke="#10e010" stroke-width="1" fill="none"/>
<path d="M763.3 656.5 L782.5 656.5" stroke="#10e010" stroke-width="1" fill="none"/>
<path d="M679.0 648.0 L690.4 648.0" stroke="#5ae2f6" stroke-width="1.3" fill="none"/>
<path d="M769.6 648.0 L775.8 648.0" stroke="#5ae2f6" stroke-width="1.3" fill="none"/>
<path d="M679.0 658.0 L690.4 658.0" stroke="#5ae2f6" stroke-width="1.3" fill="none"/>
<path d="M769.6 658.0 L775.8 658.0" stroke="#5ae2f6" stroke-width="1.3" fill="none"/>
<rect x="844.1" y="582.5" width="47.1" height="17.1" fill="none" stroke="#ec6cec" stroke-width="1.6"/>
<path d="M864.5 586.0 L870.5 586.0" stroke="#10e010" stroke-width="1.4" fill="none"/>
<path d="M855.5 589.0 L879.5 589.0" stroke="#10e010" stroke-width="1.4" fill="none"/>
<path d="M858.5 592.0 L876.5 592.0" stroke="#10e010" stroke-width="1.4" fill="none"/>
<path d="M861.5 595.0 L873.5 595.0" stroke="#10e010" stroke-width="1.4" fill="none"/>
<path d="M891.2 591.2 L898.9 591.2 L926.0 551.2" stroke="#10e010" stroke-width="1" fill="none"/>
<path d="M801.0 532.5 L898.9 567.9" stroke="#ec6cec" stroke-width="1.0" fill="none"/>
<path d="M898.9 567.9 L961.0 589.8" stroke="#6262ee" stroke-width="1.0" fill="none"/>
<path d="M824 528.3 Q845 537 867.7 544 Q900 552 930 558.5" stroke="#f06a6a" stroke-width="1.1" fill="none"/>
<path d="M834.3 528.3 Q850 534 865.6 539.8 Q885 544 901 546 L936.4 553.3 Q950 557 961 558.5" stroke="#f06a6a" stroke-width="1.1" fill="none"/>
<path d="M865 544 Q900 553 930 559 Q950 562 961 557" stroke="#ec6cec" stroke-width="1.1" fill="none"/>
<path d="M884.3 528.3 Q889 537 886.4 547 M880 528 Q882 538 880 546" stroke="#f06a6a" stroke-width="1" fill="none"/>
<path d="M901 528.3 L909.3 536.7 L930 530.4 L934.3 526 M905 545 L910 528 M912 545 L916 530" stroke="#ec6cec" stroke-width="1.1" fill="none"/>
<path d="M899 527 L903 531 L909 537 L921 533 L930 530 L934 526 M936 527 L940 532 L935 540 L929 546 L925 541 L912 545 L905 543 L909 537" stroke="#ec6cec" stroke-width="1.4" fill="none"/>
<path d="M940 527 Q955 532 948 545 Q944 556 961 558 M952 527 Q961 530 961 535" stroke="#ec6cec" stroke-width="1.3" fill="none"/>
<path d="M870 545 Q905 556 935 560 Q950 562 961 560" stroke="#ec6cec" stroke-width="1.4" fill="none"/>
<path d="M945 526 Q955 535 946 548 Q955 555 961 554 M961 540 L950 530" stroke="#ec6cec" stroke-width="1.1" fill="none"/>
<g stroke="#10e010" fill="none" stroke-width="1"><rect x="953" y="526" width="5" height="6"/></g>
<path d="M920.0 530.0 L930.0 535.0" stroke="#10e010" stroke-width="1.2" fill="none"/>
<path d="M845.8 644.6 L955.2 644.6" stroke="#10e010" stroke-width="1.2" fill="none"/>
<path d="M845.8 647.0 L955.2 647.0" stroke="#10e010" stroke-width="1.2" fill="none"/>
<path d="M846.6 649.2 L955.2 649.2" stroke="#10e010" stroke-width="0.9" fill="none"/>
<g fill="#10e010"><rect x="867" y="644.6" width="21" height="2.4"/><rect x="889" y="644.6" width="22" height="2.4" fill="none"/><rect x="911" y="644.6" width="22" height="2.4"/></g>
<path d="M844.0 640.5 L848.0 640.5" stroke="#10e010" stroke-width="1.2" fill="none"/>
<path d="M868.0 640.5 L872.0 640.5" stroke="#10e010" stroke-width="1.2" fill="none"/>
<path d="M889.0 640.5 L893.0 640.5" stroke="#10e010" stroke-width="1.2" fill="none"/>
<path d="M911.0 640.5 L915.0 640.5" stroke="#10e010" stroke-width="1.2" fill="none"/>
<path d="M933.0 640.5 L937.0 640.5" stroke="#10e010" stroke-width="1.2" fill="none"/>
<path d="M952.0 640.5 L956.0 640.5" stroke="#10e010" stroke-width="1.2" fill="none"/>
<path d="M846.0 651.9 L849.0 651.9" stroke="#10e010" stroke-width="1.2" fill="none"/>
<path d="M883.0 651.9 L886.0 651.9" stroke="#10e010" stroke-width="1.2" fill="none"/>
<path d="M919.0 651.9 L922.0 651.9" stroke="#10e010" stroke-width="1.2" fill="none"/>
<path d="M953.0 651.9 L956.0 651.9" stroke="#10e010" stroke-width="1.2" fill="none"/>
<path d="M887.5 655.4H895.0 M896.4 655.4H898.0" stroke="#10e010" stroke-width="1.625" stroke-dasharray="1 0.4"/>
<path d="M903.0 655.4H912.6 M914.2 655.4H925.0" stroke="#10e010" stroke-width="1.625" stroke-dasharray="1 0.4"/>
<path d="M903.0 659.0H910.0 M910.9 659.0H921.9 M923.1 659.0H928.8 M930.3 659.0H934.3" stroke="#10e010" stroke-width="1.625" stroke-dasharray="1 0.4"/>
</g></svg>
<svg class="a" style="left:0;top:580px" width="80" height="100"><g stroke="#2a55ff" stroke-width="1.4" fill="none">
<path d="M12.2 11.5V96.5H62.6L53.7 81.7M12.2 11.5L36 51"/><path d="M12.2 88H20.6V96.5"/><path d="M40 82.4L52.7 94.7M40 94.7L52.7 82.4"/><path d="M14.5 36.6L20 44.4L27.5 36.6M20 44.4V49.6"/></g></svg>
<div class="a" style="left:36px;top:56px;width:324px;height:605px;background:#2b313c;border-radius:4px 3px 3px 3px"></div>
<div class="a" style="left:58px;top:59px;width:300px;height:599px;background:#353b47;border-radius:4px"></div>
<div class="a" style="left:59px;top:60px;width:298px;height:597px;background:#3b4453;border-radius:4px"></div>
<div class="a" style="left:61px;top:98px;width:1px;height:499px;background:#333a45"></div>
<svg class="a" style="left:42px;top:60px" width="14" height="54"><g fill="none" stroke="#e6e6e6">
<path d="M2.5 3.5L9.5 10.5M9.5 3.5L2.5 10.5" stroke-width="2"/>
<path d="M2.5 21V31" stroke-width="1.5"/><path d="M10 22L5 26L10 30Z" fill="#e6e6e6" stroke="none"/>
<circle cx="6" cy="45" r="2.6" stroke-width="1.6"/><path d="M6 39.5V41.5M6 48.5V50.5M0.5 45H2.5M9.5 45H11.5M2 41L3.5 42.5M8.5 47.5L10 49M10 41L8.5 42.5M3.5 47.5L2 49" stroke-width="1.5"/></g></svg>
<svg class="a" style="left:70px;top:72px" width="19" height="18"><path d="M2 5.5 L8.5 5.5 L8.5 12 L2 12 Z" fill="#dcdcdc"/><path d="M7 4 Q8 1 11 2.2 L17 10 Q18 14 14.5 14 L8.5 12 L8.5 5.5 Z" fill="#dcdcdc"/><path d="M8.6 3.2 Q10 2.6 11 3.6 L16 10" stroke="#3b4453" stroke-width="0.8" fill="none"/><circle cx="14.3" cy="11.6" r="1.9" stroke="#3b4453" stroke-width="0.9" fill="none"/><path d="M1 17 Q0.5 14 3.2 14 Q4.2 11.8 6.6 12.7 Q9 12.5 9 15 Q9.3 17 7.5 17 Z" fill="#55b4f2"/><path d="M14 0.5V6.5M11 3.5H17" stroke="#4cd37a" stroke-width="1.8"/></svg>
<svg class="a" style="left:95px;top:72px" width="19" height="18"><path d="M2 5.5 L8.5 5.5 L8.5 12 L2 12 Z" fill="#dcdcdc"/><path d="M7 4 Q8 1 11 2.2 L17 10 Q18 14 14.5 14 L8.5 12 L8.5 5.5 Z" fill="#dcdcdc"/><path d="M8.6 3.2 Q10 2.6 11 3.6 L16 10" stroke="#3b4453" stroke-width="0.8" fill="none"/><circle cx="14.3" cy="11.6" r="1.9" stroke="#3b4453" stroke-width="0.9" fill="none"/><path d="M0.5 11 H4 L5 12 H9 V17 H0.5 Z" fill="#f2c25a"/><path d="M0.5 13.5 H9" stroke="#c99a3a" stroke-width="0.6"/></svg>
<svg class="a" style="left:325px;top:72px" width="12" height="17"><circle cx="6" cy="3.6" r="3.2" fill="#a6a9b0"/><path d="M1 17V12Q1 8 6 8Q11 8 11 12V17Z" fill="#a6a9b0"/></svg>
<div class="a" style="left:354px;top:98px;width:1px;height:499px;background:#30363f"></div>
<div class="a" style="left:350px;top:102px;width:5px;height:490px;background:#a9acb2;border-radius:3px 3px 0 0"></div>
<div class="a" style="left:61px;top:98px;width:294px;height:494px;overflow:hidden"><div class="a" style="left:-61px;top:-98px;width:400px;height:700px"><div class="sel" style="top:165px"></div><div class="sel" style="top:197px"></div><div class="sel" style="top:229px"></div><div class="sel" style="top:325px"></div><div class="sel" style="top:485px"></div><svg class="a" style="left:78px;top:114px" width="9" height="6"><path d="M0 0H9L4.5 5Z" fill="#8e939b"/></svg><svg class="a" style="left:93px;top:110px" width="19" height="18"><path d="M2 5.5 L8.5 5.5 L8.5 12 L2 12 Z" fill="#dcdcdc"/><path d="M7 4 Q8 1 11 2.2 L17 10 Q18 14 14.5 14 L8.5 12 L8.5 5.5 Z" fill="#dcdcdc"/><path d="M8.6 3.2 Q10 2.6 11 3.6 L16 10" stroke="#3b4453" stroke-width="0.8" fill="none"/><circle cx="14.3" cy="11.6" r="1.9" stroke="#3b4453" stroke-width="0.9" fill="none"/><path d="M1 17 Q0.5 14 3.2 14 Q4.2 11.8 6.6 12.7 Q9 12.5 9 15 Q9.3 17 7.5 17 Z" fill="#55b4f2"/></svg><div class="a t" style="left:114px;top:111px;font-size:12.5px;color:#ececec">Civil Sample Sheet Set</div><div class="dh" style="left:82px;top:149px;width:24px"></div><svg class="a" style="left:114px;top:142px" width="16" height="15"><rect x="0" y="0" width="16" height="15" fill="#e6e6e6"/><path d="M3.5 2.5H13.8V12.8H3.5Z" fill="none" stroke="#505050" stroke-width="1"/><path d="M7.2 2.5V12.8M10.5 2.5V12.8M6 5.6H13.8M6 8.7H13.8" stroke="#505050" stroke-width="0.9"/><path d="M2 3L8 12.8H2Z" fill="#151515"/></svg><div class="a t" style="left:134px;top:143px;font-size:12.5px;color:#ececec">00 - Cover Sheet</div><div class="dh" style="left:82px;top:181px;width:24px"></div><svg class="a" style="left:114px;top:174px" width="16" height="15"><rect x="0" y="0" width="16" height="15" fill="#e6e6e6"/><path d="M3.5 2.5H13.8V12.8H3.5Z" fill="none" stroke="#505050" stroke-width="1"/><path d="M7.2 2.5V12.8M10.5 2.5V12.8M6 5.6H13.8M6 8.7H13.8" stroke="#505050" stroke-width="0.9"/><path d="M2 3L8 12.8H2Z" fill="#151515"/></svg><div class="a t" style="left:134px;top:175px;font-size:12.5px;color:#ececec">01 - Master Plan</div><div class="dh" style="left:82px;top:213px;width:24px"></div><svg class="a" style="left:114px;top:206px" width="16" height="15"><rect x="0" y="0" width="16" height="15" fill="#e6e6e6"/><path d="M3.5 2.5H13.8V12.8H3.5Z" fill="none" stroke="#505050" stroke-width="1"/><path d="M7.2 2.5V12.8M10.5 2.5V12.8M6 5.6H13.8M6 8.7H13.8" stroke="#505050" stroke-width="0.9"/><path d="M2 3L8 12.8H2Z" fill="#151515"/></svg><div class="a t" style="left:134px;top:207px;font-size:12.5px;color:#ececec">20 - Drainage Summary</div><div class="dh" style="left:82px;top:245px;width:24px"></div><svg class="a" style="left:114px;top:238px" width="16" height="15"><rect x="0" y="0" width="16" height="15" fill="#e6e6e6"/><path d="M3.5 2.5H13.8V12.8H3.5Z" fill="none" stroke="#505050" stroke-width="1"/><path d="M7.2 2.5V12.8M10.5 2.5V12.8M6 5.6H13.8M6 8.7H13.8" stroke="#505050" stroke-width="0.9"/><path d="M2 3L8 12.8H2Z" fill="#151515"/></svg><div class="a t" style="left:134px;top:239px;font-size:12.5px;color:#ececec">21 - Erosion Control Plan</div><div class="dh" style="left:82px;top:277px;width:11px"></div><svg class="a" style="left:100px;top:272px" width="5" height="10"><path d="M0 0V10L5 5Z" fill="#8e939b"/></svg><svg class="a" style="left:114px;top:269px" width="16" height="16"><path d="M3.5 12.5V14.5H15.5V3.5H13.5M1.5 10.5V12.5H13.5V1.5H11.5" stroke="#e0e0e0" fill="none" stroke-width="1"/><rect x="0" y="0" width="11.5" height="11" fill="#e4e4e4"/><path d="M2.5 2H9.5V9H2.5Z" fill="none" stroke="#555" stroke-width="0.8"/><path d="M5 2V9M7.3 2V9M4 4.3H9.5M4 6.6H9.5" stroke="#555" stroke-width="0.7"/><path d="M1.5 2.5L5.5 9H1.5Z" fill="#151515"/></svg><div class="a t" style="left:134px;top:271px;font-size:12.5px;color:#ececec">Existing Conditions</div><div class="dh" style="left:82px;top:309px;width:11px"></div><svg class="a" style="left:98px;top:306px" width="9" height="6"><path d="M0 0H9L4.5 5Z" fill="#8e939b"/></svg><svg class="a" style="left:114px;top:301px" width="16" height="16"><path d="M3.5 12.5V14.5H15.5V3.5H13.5M1.5 10.5V12.5H13.5V1.5H11.5" stroke="#e0e0e0" fill="none" stroke-width="1"/><rect x="0" y="0" width="11.5" height="11" fill="#e4e4e4"/><path d="M2.5 2H9.5V9H2.5Z" fill="none" stroke="#555" stroke-width="0.8"/><path d="M5 2V9M7.3 2V9M4 4.3H9.5M4 6.6H9.5" stroke="#555" stroke-width="0.7"/><path d="M1.5 2.5L5.5 9H1.5Z" fill="#151515"/></svg><div class="a t" style="left:134px;top:303px;font-size:12.5px;color:#ececec">Site Grading Plans</div><div class="dh" style="left:102px;top:341px;width:24px"></div><svg class="a" style="left:134px;top:334px" width="16" height="15"><rect x="0" y="0" width="16" height="15" fill="#e6e6e6"/><path d="M3.5 2.5H13.8V12.8H3.5Z" fill="none" stroke="#505050" stroke-width="1"/><path d="M7.2 2.5V12.8M10.5 2.5V12.8M6 5.6H13.8M6 8.7H13.8" stroke="#505050" stroke-width="0.9"/><path d="M2 3L8 12.8H2Z" fill="#151515"/></svg><div class="a t" style="left:154px;top:335px;font-size:12.5px;color:#ececec">06 - Site Grading Plan 1</div><div class="dh" style="left:102px;top:373px;width:24px"></div><svg class="a" style="left:134px;top:366px" width="16" height="15"><rect x="0" y="0" width="16" height="15" fill="#e6e6e6"/><path d="M3.5 2.5H13.8V12.8H3.5Z" fill="none" stroke="#505050" stroke-width="1"/><path d="M7.2 2.5V12.8M10.5 2.5V12.8M6 5.6H13.8M6 8.7H13.8" stroke="#505050" stroke-width="0.9"/><path d="M2 3L8 12.8H2Z" fill="#151515"/></svg><div class="a t" style="left:154px;top:367px;font-size:12.5px;color:#ececec">07 - Site Grading Plan 2</div><div class="dh" style="left:102px;top:405px;width:24px"></div><svg class="a" style="left:134px;top:398px" width="16" height="15"><rect x="0" y="0" width="16" height="15" fill="#e6e6e6"/><path d="M3.5 2.5H13.8V12.8H3.5Z" fill="none" stroke="#505050" stroke-width="1"/><path d="M7.2 2.5V12.8M10.5 2.5V12.8M6 5.6H13.8M6 8.7H13.8" stroke="#505050" stroke-width="0.9"/><path d="M2 3L8 12.8H2Z" fill="#151515"/></svg><div class="a t" style="left:154px;top:399px;font-size:12.5px;color:#ececec">08 - Site Grading Plan 3</div><div class="dh" style="left:102px;top:437px;width:24px"></div><svg class="a" style="left:134px;top:430px" width="16" height="15"><rect x="0" y="0" width="16" height="15" fill="#e6e6e6"/><path d="M3.5 2.5H13.8V12.8H3.5Z" fill="none" stroke="#505050" stroke-width="1"/><path d="M7.2 2.5V12.8M10.5 2.5V12.8M6 5.6H13.8M6 8.7H13.8" stroke="#505050" stroke-width="0.9"/><path d="M2 3L8 12.8H2Z" fill="#151515"/></svg><div class="a t" style="left:154px;top:431px;font-size:12.5px;color:#ececec">09 - Site Grading Plan 4</div><div class="dh" style="left:82px;top:469px;width:11px"></div><svg class="a" style="left:98px;top:466px" width="9" height="6"><path d="M0 0H9L4.5 5Z" fill="#8e939b"/></svg><svg class="a" style="left:114px;top:461px" width="16" height="16"><path d="M3.5 12.5V14.5H15.5V3.5H13.5M1.5 10.5V12.5H13.5V1.5H11.5" stroke="#e0e0e0" fill="none" stroke-width="1"/><rect x="0" y="0" width="11.5" height="11" fill="#e4e4e4"/><path d="M2.5 2H9.5V9H2.5Z" fill="none" stroke="#555" stroke-width="0.8"/><path d="M5 2V9M7.3 2V9M4 4.3H9.5M4 6.6H9.5" stroke="#555" stroke-width="0.7"/><path d="M1.5 2.5L5.5 9H1.5Z" fill="#151515"/></svg><div class="a t" style="left:134px;top:463px;font-size:12.5px;color:#ececec">Site Utility Plans</div><div class="dh" style="left:102px;top:501px;width:24px"></div><svg class="a" style="left:134px;top:494px" width="16" height="15"><rect x="0" y="0" width="16" height="15" fill="#e6e6e6"/><path d="M3.5 2.5H13.8V12.8H3.5Z" fill="none" stroke="#505050" stroke-width="1"/><path d="M7.2 2.5V12.8M10.5 2.5V12.8M6 5.6H13.8M6 8.7H13.8" stroke="#505050" stroke-width="0.9"/><path d="M2 3L8 12.8H2Z" fill="#151515"/></svg><div class="a t" style="left:154px;top:495px;font-size:12.5px;color:#ececec">10 - Site Utility Plan 1</div><div class="dh" style="left:102px;top:533px;width:24px"></div><svg class="a" style="left:134px;top:526px" width="16" height="15"><rect x="0" y="0" width="16" height="15" fill="#e6e6e6"/><path d="M3.5 2.5H13.8V12.8H3.5Z" fill="none" stroke="#505050" stroke-width="1"/><path d="M7.2 2.5V12.8M10.5 2.5V12.8M6 5.6H13.8M6 8.7H13.8" stroke="#505050" stroke-width="0.9"/><path d="M2 3L8 12.8H2Z" fill="#151515"/></svg><div class="a t" style="left:154px;top:527px;font-size:12.5px;color:#ececec">11 - Site Utility Plan 2</div><div class="dh" style="left:102px;top:565px;width:24px"></div><svg class="a" style="left:134px;top:558px" width="16" height="15"><rect x="0" y="0" width="16" height="15" fill="#e6e6e6"/><path d="M3.5 2.5H13.8V12.8H3.5Z" fill="none" stroke="#505050" stroke-width="1"/><path d="M7.2 2.5V12.8M10.5 2.5V12.8M6 5.6H13.8M6 8.7H13.8" stroke="#505050" stroke-width="0.9"/><path d="M2 3L8 12.8H2Z" fill="#151515"/></svg><div class="a t" style="left:154px;top:559px;font-size:12.5px;color:#ececec">12 - Site Utility Plan 3</div><div class="dh" style="left:102px;top:597px;width:24px"></div><svg class="a" style="left:134px;top:590px" width="16" height="15"><rect x="0" y="0" width="16" height="15" fill="#e6e6e6"/><path d="M3.5 2.5H13.8V12.8H3.5Z" fill="none" stroke="#505050" stroke-width="1"/><path d="M7.2 2.5V12.8M10.5 2.5V12.8M6 5.6H13.8M6 8.7H13.8" stroke="#505050" stroke-width="0.9"/><path d="M2 3L8 12.8H2Z" fill="#151515"/></svg><div class="a t" style="left:154px;top:591px;font-size:12.5px;color:#ececec">13 - Site Utility Plan 4</div><div class="dv" style="left:81px;top:133px;height:464px"></div><div class="dv" style="left:101px;top:325px;height:113px"></div><div class="dv" style="left:101px;top:485px;height:112px"></div></div></div>
<div class="a" style="left:59px;top:597px;width:298px;height:10px;background:#2f3540"></div>
<div class="a" style="left:181px;top:600px;width:4px;height:4px;background:#8d939b"></div>
<div class="a" style="left:189px;top:600px;width:4px;height:4px;background:#8d939b"></div>
<div class="a" style="left:197px;top:600px;width:4px;height:4px;background:#8d939b"></div>
<div class="a" style="left:205px;top:600px;width:4px;height:4px;background:#8d939b"></div>
<div class="a" style="left:213px;top:600px;width:4px;height:4px;background:#8d939b"></div>
<div class="a" style="left:221px;top:600px;width:4px;height:4px;background:#8d939b"></div>
<div class="a" style="left:229px;top:600px;width:4px;height:4px;background:#8d939b"></div>
<div class="a" style="left:237px;top:600px;width:4px;height:4px;background:#8d939b"></div>
<div class="a t" style="left:77px;top:621px;font-size:17px;color:#f2f2f2;font-weight:bold;letter-spacing:-1px">シート プロパティ</div>
<svg class="a" style="left:331px;top:623px" width="12" height="16"><path d="M1.5 7L6 2.5L10.5 7M1.5 13L6 8.5L10.5 13" stroke="#e0e0e0" stroke-width="1.4" fill="none"/></svg>
<div class="a t" style="left:42px;top:634px;font-size:12.5px;color:#d8d8d8;transform-origin:0 0;transform:rotate(-90deg) scaleX(0.745)">WEB 用シート セット マネージャ</div>
<svg class="a" style="left:39px;top:642px" width="19" height="18"><path d="M2 5.5 L8.5 5.5 L8.5 12 L2 12 Z" fill="#dcdcdc"/><path d="M7 4 Q8 1 11 2.2 L17 10 Q18 14 14.5 14 L8.5 12 L8.5 5.5 Z" fill="#dcdcdc"/><path d="M8.6 3.2 Q10 2.6 11 3.6 L16 10" stroke="#2b313c" stroke-width="0.8" fill="none"/><circle cx="14.3" cy="11.6" r="1.9" stroke="#2b313c" stroke-width="0.9" fill="none"/><path d="M1 17 Q0.5 14 3.2 14 Q4.2 11.8 6.6 12.7 Q9 12.5 9 15 Q9.3 17 7.5 17 Z" fill="#55b4f2"/></svg>
<div class="a" style="left:284px;top:180px;width:133px;height:72px;background:#454d5c"></div>
<div class="a" style="left:288px;top:184px;width:125px;height:32px;background:#383f4b"></div>
<div class="a t" style="left:297px;top:194px;font-size:12.5px;color:#e8e8e8;font-weight:normal;letter-spacing:-0.9px">PDF にパブリッシュ</div>
<div class="a t" style="left:296px;top:226px;font-size:12.5px;color:#e8e8e8;font-weight:normal;letter-spacing:-0.4px">e-トランスミット</div>
<div class="a" style="left:450px;top:228px;width:481px;height:300px;background:#2c313b"></div>
<div class="a" style="left:451px;top:229px;width:479px;height:298px;background:#434a5a"></div>
<svg class="a" style="left:906px;top:241px" width="12" height="12"><path d="M0.5 0.5L11.5 11.5M11.5 0.5L0.5 11.5" stroke="#a9adb5" stroke-width="1.2"/></svg>
<div class="a t" style="left:474px;top:255px;font-size:18px;color:#f2f2f2;font-weight:bold;">パブリッシュの設定</div>
<div class="a t" style="left:474px;top:299px;font-size:14px;color:#f2f2f2;font-weight:bold;letter-spacing:0.1px">5 個のファイルがパブリッシュ用に選択されました</div>
<div class="a t" style="left:498px;top:333px;font-size:13px;color:#e4e4e4;font-weight:normal;letter-spacing:-1px">出力形式</div>
<div class="a t" style="left:498px;top:369px;font-size:13px;color:#e4e4e4;font-weight:normal;letter-spacing:-1px">ファイル名</div>
<div class="a t" style="left:498px;top:404px;font-size:13px;color:#e4e4e4;font-weight:normal;letter-spacing:-1px">保管場所</div>
<div class="a" style="left:601px;top:322px;width:298px;height:98px;background:#353b47;box-shadow:0 1px 2px rgba(0,0,0,.3)"></div>
<div class="a" style="left:602px;top:323px;width:296px;height:32px;background:#464e5d"></div>
<div class="a" style="left:602px;top:355px;width:296px;height:1px;background:#5a6170"></div>
<div class="a" style="left:602px;top:356px;width:296px;height:31px;background:#363c48"></div>
<div class="a" style="left:602px;top:387px;width:296px;height:32px;background:#414856"></div>
<div class="a t" style="left:610px;top:333px;font-size:12.5px;color:#e8e8e8;font-weight:normal;letter-spacing:-0.75px">単一のマルチページ PDF ファイル</div>
<svg class="a" style="left:612px;top:367px" width="11" height="9"><path d="M1 4.5L4 7.5L10 1" stroke="#4fb3ea" stroke-width="1.8" fill="none"/></svg>
<div class="a t" style="left:630px;top:365px;font-size:12.5px;color:#f0f0f0;font-weight:normal;letter-spacing:-0.75px">単一のマルチページ PDF ファイル</div>
<div class="a t" style="left:630px;top:397px;font-size:12.5px;color:#e8e8e8;font-weight:normal;letter-spacing:-1.0px">ページごとに PDF を分割</div>
<div class="a" style="left:610px;top:421px;width:288px;height:1px;background:#8a909a"></div>
<div class="a" style="left:498px;top:436px;width:16px;height:16px;border:1px solid #a6aab2"></div>
<div class="a t" style="left:524px;top:437px;font-size:12.2px;color:#e4e4e4;font-weight:normal;letter-spacing:-0.05px">重複する名前が存在する場合はファイルを上書き</div>
<div class="a" style="left:706px;top:480px;width:86px;height:24px;border:1px solid #a4a8b0;border-radius:1px"></div>
<div class="a t" style="left:719px;top:485px;font-size:12.5px;color:#f2f2f2;font-weight:bold;letter-spacing:-0.4px">キャンセル</div>
<div class="a" style="left:808px;top:480px;width:98px;height:24px;background:#1b8ed0;border-radius:1px"></div>
<div class="a t" style="left:821px;top:485px;font-size:12.5px;color:#ffffff;font-weight:bold;letter-spacing:-0.4px">パブリッシュ</div>
<div class="a" style="left:0;top:690px;width:961px;height:30px;background:#222833"></div>
<div class="a" style="left:0;top:690px;width:961px;height:4px;background:#3b4453"></div>
<div class="a" style="left:92px;top:694px;width:95px;height:26px;background:#3b4453;clip-path:polygon(9px 0,100% 0,calc(100% - 9px) 100%,0 100%)"></div>
<div class="a ham" style="left:15px;top:700px"></div>
<div class="a ham" style="left:15px;top:705px"></div>
<div class="a ham" style="left:15px;top:710px"></div>
<div class="a sl" style="left:44px;top:698px"></div>
<div class="a sl" style="left:176px;top:698px"></div>
<div class="a sl" style="left:222px;top:698px"></div>
<div class="a t" style="left:57px;top:700px;font-size:11.5px;color:#e6e6e6;font-weight:normal;letter-spacing:-1.5px">モデル</div>
<div class="a t" style="left:109px;top:700px;font-size:11.6px;color:#f2f2f2;font-weight:normal;">Master Plan</div>
<svg class="a" style="left:196px;top:699px" width="15" height="15"><path d="M7.5 0V15M0 7.5H15" stroke="#f0f0f0" stroke-width="1.8"/></svg>
<div class="a" style="left:812px;top:696px;width:42px;height:24px;background:#3b4453"></div>
<div class="a t" style="left:815px;top:701px;font-size:12px;color:#f0f0f0;font-weight:normal;letter-spacing:-3.2px">ペーパー</div>
<div class="a" style="left:857px;top:696px;width:104px;height:24px;background:#3b4453"></div>
<div class="a" style="left:882px;top:697px;width:22px;height:23px;background:#5b8cc2"></div>
<svg class="a" style="left:857px;top:696px" width="104" height="24"><g fill="none" stroke="#e8e8e8" stroke-width="1.1"><path d="M4 5V19H20M4 15H8V19"/><circle cx="33" cy="13" r="6.5"/><path d="M33 13L41 5M33 13H43"/></g><path d="M50 11H58L54 15Z" fill="#e8e8e8"/><path d="M69 4L82 19" stroke="#e05050" stroke-width="1.3"/><path d="M75 4V20" stroke="#4fcf5f" stroke-width="1.3"/><circle cx="75" cy="12" r="1.8" fill="#3b4453" stroke="#eee" stroke-width="1"/><path d="M90 11H98L94 15Z" fill="#e8e8e8"/></svg>
<div class="a" style="left:265px;top:664px;width:60px;height:25px;background:rgba(59,68,83,0.82);border-radius:3px 0 0 3px"></div>
<div class="a" style="left:324px;top:664px;width:637px;height:25px;background:rgba(238,238,238,0.72);border-radius:5px 0 0 5px"></div>
<svg class="a" style="left:265px;top:664px" width="100" height="25"><g fill="#d8d8d8"><rect x="4" y="4.0" width="2" height="2"/><rect x="4" y="7.2" width="2" height="2"/><rect x="4" y="10.4" width="2" height="2"/><rect x="4" y="13.600000000000001" width="2" height="2"/><rect x="4" y="16.8" width="2" height="2"/><rect x="8" y="4.0" width="2" height="2"/><rect x="8" y="7.2" width="2" height="2"/><rect x="8" y="10.4" width="2" height="2"/><rect x="8" y="13.600000000000001" width="2" height="2"/><rect x="8" y="16.8" width="2" height="2"/></g><path d="M17 8L26 17M26 8L17 17" stroke="#e0e0e0" stroke-width="1.8"/><path d="M37 20L46 11" stroke="#e0e0e0" stroke-width="3"/><path d="M44 13a4 4 0 1 1 5 -5l-2.5 2.5 2 2 2.5 -2.5a4 4 0 0 1 -5 5" fill="#e0e0e0"/><rect x="62.5" y="7.5" width="15" height="11" fill="none" stroke="#555" stroke-width="1"/><path d="M62.5 9.5H77.5" stroke="#555"/><path d="M65 12L67.5 14L65 16M68 16.5H71" stroke="#555" fill="none"/><path d="M81 10H88L84.5 14Z" fill="#777"/></svg>
<div class="a t" style="left:359px;top:669px;font-size:14px;color:#8a8a8a;font-weight:normal;font-style:italic;letter-spacing:-4px">ここにコマンドを入力</div>
</body></html>
